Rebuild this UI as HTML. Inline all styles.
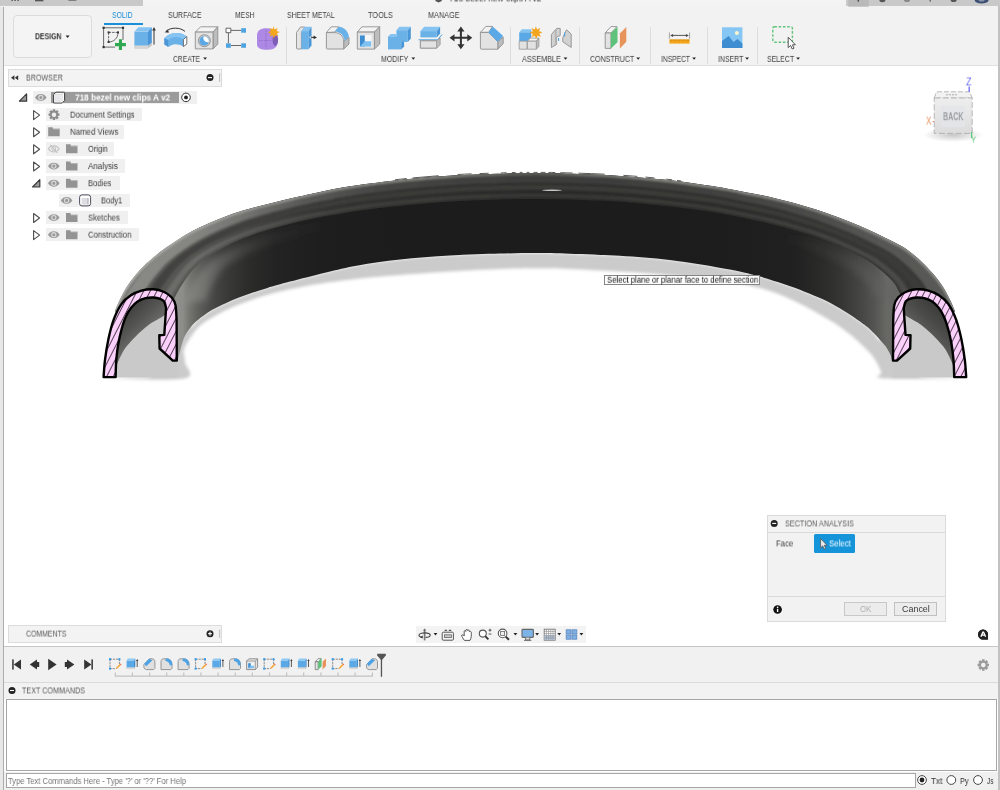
<!DOCTYPE html>
<html>
<head>
<meta charset="utf-8">
<style>
*{box-sizing:border-box;margin:0;padding:0}
html,body{width:1000px;height:790px;overflow:hidden;background:#fff}
body{font-family:"Liberation Sans",sans-serif;position:relative;color:#333}
.abs{position:absolute}
.t{position:absolute;white-space:pre;line-height:1;transform-origin:0 50%;will-change:transform}
#topL{left:0;top:0;width:142.6px;height:6.6px;background:#c9c9c9}
#topR{left:846px;top:0;width:154px;height:6.6px;background:#c9c9c9}
#topM{left:143px;top:0;width:703px;height:7px;background:#f3f3f3}
#toolbar{left:0;top:6px;width:1000px;height:59.6px;background:#f2f2f2;border-bottom:1px solid #e0e0e0}
#edgeL{left:0;top:6.6px;width:4.4px;height:784px;background:#e8e8e8;border-right:1.2px solid #adadad}
#edgeR{left:998px;top:6px;width:2px;height:784px;background:#c2c2c2}
.sep{position:absolute;top:27px;width:1px;height:37px;background:#dedede}
#design{left:12.8px;top:14.6px;width:79px;height:43.6px;border:1px solid #dcdcdc;border-radius:4px;background:#f4f4f4}
.hdr{position:absolute;background:#f3f3f3;border:1px solid #dcdcdc}
.row{position:absolute;background:#f0f0f0}
#timeline{left:4px;top:646px;width:994px;height:37px;background:#f1f1f1;border-top:1px solid #c6c6c6}
#tcHdr{left:4px;top:682px;width:994px;height:17px;background:#f2f2f2;border-top:1px solid #dadada}
#tcArea{left:6px;top:698.8px;width:991px;height:72.6px;background:#fff;border:1px solid #a6a6a6}
#tcBar{left:4px;top:772px;width:994px;height:18px;background:#f0f0f0}
#tcInput{left:6px;top:773px;width:909.6px;height:14.6px;background:#fff;border:1px solid #a6a6a6}
#navbar{left:416px;top:626px;width:170px;height:17px;background:#f3f3f3}
#dlg{left:767px;top:515px;width:179px;height:107px;background:#f2f2f2;border:1px solid #dadada}
#tip{left:604px;top:274.7px;width:156px;height:10px;background:#fdfdfd;border:1px solid #858585}

</style>
</head>
<body>
<div class="abs" id="topM"></div>
<div class="abs" id="topL"></div>
<div class="abs" id="topR"></div>
<div class="abs" id="toolbar"></div>
<svg class="abs" id="canvas" style="left:0;top:65px" width="1000" height="582" viewBox="0 65 1000 582">
<!--RING-->
<defs>
<linearGradient id="gWall" gradientUnits="userSpaceOnUse" x1="103" y1="0" x2="967" y2="0"><stop offset="0.0856" stop-color="#90908c"/><stop offset="0.0926" stop-color="#8c8c88"/><stop offset="0.1007" stop-color="#74746f"/><stop offset="0.1088" stop-color="#62625f"/><stop offset="0.1204" stop-color="#50504e"/><stop offset="0.1331" stop-color="#424240"/><stop offset="0.1493" stop-color="#363635"/><stop offset="0.1701" stop-color="#2b2b2a"/><stop offset="0.1991" stop-color="#232323"/><stop offset="0.2512" stop-color="#1e1e1e"/><stop offset="0.3438" stop-color="#1c1c1c"/><stop offset="0.4988" stop-color="#1c1c1c"/><stop offset="0.5009" stop-color="#1c1c1c"/><stop offset="0.6560" stop-color="#1c1c1c"/><stop offset="0.7486" stop-color="#1e1e1e"/><stop offset="0.8007" stop-color="#212121"/><stop offset="0.8296" stop-color="#2a2a29"/><stop offset="0.8505" stop-color="#333332"/><stop offset="0.8667" stop-color="#3e3e3c"/><stop offset="0.8794" stop-color="#484846"/><stop offset="0.8910" stop-color="#525250"/><stop offset="0.8991" stop-color="#5c5c59"/><stop offset="0.9072" stop-color="#686865"/><stop offset="0.9141" stop-color="#666663"/></linearGradient>
<linearGradient id="gTop" gradientUnits="userSpaceOnUse" x1="103" y1="0" x2="967" y2="0"><stop offset="0.0185" stop-color="#5a5a57"/><stop offset="0.1123" stop-color="#545451"/><stop offset="0.1817" stop-color="#424240"/><stop offset="0.2627" stop-color="#313130"/><stop offset="0.4988" stop-color="#282827"/><stop offset="0.5009" stop-color="#282827"/><stop offset="0.7370" stop-color="#2a2a29"/><stop offset="0.8181" stop-color="#2f2f2e"/><stop offset="0.8875" stop-color="#363634"/><stop offset="0.9812" stop-color="#3a3a38"/></linearGradient>
<linearGradient id="gRim" gradientUnits="userSpaceOnUse" x1="103" y1="0" x2="967" y2="0"><stop offset="0.0185" stop-color="#b2b2ae"/><stop offset="0.1123" stop-color="#a6a6a2"/><stop offset="0.1817" stop-color="#92928f"/><stop offset="0.2627" stop-color="#8a8a87"/><stop offset="0.3669" stop-color="#84847f"/><stop offset="0.4363" stop-color="#6e6e6b"/><stop offset="0.4988" stop-color="#585856"/><stop offset="0.5009" stop-color="#585856"/><stop offset="0.5634" stop-color="#6e6e6b"/><stop offset="0.6329" stop-color="#84847f"/><stop offset="0.7370" stop-color="#868683"/><stop offset="0.8181" stop-color="#868683"/><stop offset="0.8875" stop-color="#8a8a86"/><stop offset="0.9812" stop-color="#8e8e8a"/></linearGradient>
<linearGradient id="gA" gradientUnits="userSpaceOnUse" x1="103" y1="0" x2="967" y2="0"><stop offset="0.0185" stop-color="#8a8a86"/><stop offset="0.1007" stop-color="#868682"/><stop offset="0.1586" stop-color="#747471"/><stop offset="0.2280" stop-color="#5a5a58"/><stop offset="0.3206" stop-color="#464644"/><stop offset="0.4988" stop-color="#3d3d3b"/><stop offset="0.5009" stop-color="#3d3d3b"/><stop offset="0.6792" stop-color="#40403e"/><stop offset="0.7718" stop-color="#464644"/><stop offset="0.8412" stop-color="#4e4e4c"/><stop offset="0.8991" stop-color="#565654"/><stop offset="0.9812" stop-color="#5a5a57"/></linearGradient>
<linearGradient id="gB" gradientUnits="userSpaceOnUse" x1="103" y1="0" x2="967" y2="0"><stop offset="0.0185" stop-color="#454543"/><stop offset="0.1586" stop-color="#403f3d"/><stop offset="0.2512" stop-color="#3c3c3a"/><stop offset="0.4988" stop-color="#3a3a38"/><stop offset="0.5009" stop-color="#3a3a38"/><stop offset="0.7486" stop-color="#3a3a38"/><stop offset="0.8412" stop-color="#3a3a38"/><stop offset="0.9812" stop-color="#3a3a38"/></linearGradient>
<linearGradient id="gC" gradientUnits="userSpaceOnUse" x1="103" y1="0" x2="967" y2="0"><stop offset="0.0185" stop-color="#70706c"/><stop offset="0.1123" stop-color="#6a6a67"/><stop offset="0.1817" stop-color="#545452"/><stop offset="0.2743" stop-color="#40403e"/><stop offset="0.4988" stop-color="#383836"/><stop offset="0.5009" stop-color="#383836"/><stop offset="0.7255" stop-color="#3c3c3a"/><stop offset="0.8181" stop-color="#424240"/><stop offset="0.8875" stop-color="#4a4a48"/><stop offset="0.9812" stop-color="#4e4e4c"/></linearGradient>
<linearGradient id="gD" gradientUnits="userSpaceOnUse" x1="103" y1="0" x2="967" y2="0"><stop offset="0.0856" stop-color="#8e8e8a" stop-opacity="0.75"/><stop offset="0.1181" stop-color="#868682" stop-opacity="0.60"/><stop offset="0.1586" stop-color="#70706d" stop-opacity="0.30"/><stop offset="0.2049" stop-color="#5a5a58" stop-opacity="0.10"/><stop offset="0.2627" stop-color="#555" stop-opacity="0.00"/><stop offset="0.4988" stop-color="#555" stop-opacity="0.00"/><stop offset="0.5009" stop-color="#444" stop-opacity="0.00"/><stop offset="0.7833" stop-color="#444" stop-opacity="0.00"/><stop offset="0.8412" stop-color="#4e4e4c" stop-opacity="0.20"/><stop offset="0.8817" stop-color="#5e5e5b" stop-opacity="0.45"/><stop offset="0.9141" stop-color="#666663" stop-opacity="0.60"/></linearGradient>
<linearGradient id="gU" gradientUnits="userSpaceOnUse" x1="118" y1="300" x2="160" y2="345"><stop offset="0" stop-color="#2e2e2d"/><stop offset="0.5" stop-color="#565654"/><stop offset="1" stop-color="#8a8a87"/></linearGradient>
<linearGradient id="gUr" gradientUnits="userSpaceOnUse" x1="951.8" y1="300" x2="909.8" y2="345"><stop offset="0" stop-color="#2e2e2d"/><stop offset="0.5" stop-color="#4c4c4a"/><stop offset="1" stop-color="#767673"/></linearGradient>
<pattern id="hatch" patternUnits="userSpaceOnUse" width="5.9" height="5.9" patternTransform="rotate(27)"><rect width="5.9" height="5.9" fill="#fbd0fb"/><rect x="0" y="0" width="0.8" height="5.9" fill="#2c1c2c"/></pattern>
<filter id="blS" x="-5%" y="-20%" width="110%" height="140%"><feGaussianBlur stdDeviation="1.5"/></filter>
<filter id="bl1" x="-5%" y="-20%" width="110%" height="140%"><feGaussianBlur stdDeviation="0.9"/></filter>
<filter id="blD" x="-5%" y="-30%" width="110%" height="160%"><feGaussianBlur stdDeviation="3.2"/></filter>
<filter id="bl05"><feGaussianBlur stdDeviation="0.5"/></filter>
<clipPath id="clipRing"><path d="M114.8,311.5 C115.4,310.1 116.5,306.8 118.3,303.0 C120.1,299.2 122.8,293.4 125.5,289.0 C128.2,284.6 130.8,280.8 134.2,276.7 C137.5,272.6 141.8,267.9 145.6,264.2 C149.4,260.5 153.2,257.4 157.0,254.4 C160.8,251.4 163.2,249.5 168.4,246.0 C173.6,242.5 181.1,237.3 188.0,233.4 C194.9,229.5 202.7,226.0 210.0,222.8 C217.3,219.6 224.7,216.6 232.0,214.0 C239.3,211.4 246.7,209.4 254.0,207.4 C261.3,205.4 268.7,203.7 276.0,201.9 C283.3,200.1 290.7,198.5 298.0,196.8 C305.3,195.2 311.0,193.8 320.0,192.0 C329.0,190.2 338.0,188.1 352.0,186.0 C366.0,183.9 386.7,181.3 404.0,179.5 C421.3,177.7 438.7,176.3 456.0,175.3 C473.3,174.3 494.9,173.8 508.0,173.4 C521.1,173.0 525.9,173.1 534.9,173.1 C543.9,173.1 548.6,173.0 561.8,173.4 C574.9,173.8 596.5,174.3 613.8,175.4 C631.1,176.5 648.5,177.9 665.8,179.8 C683.1,181.7 703.8,184.8 717.8,187.0 C731.8,189.2 741.0,191.3 750.0,193.1 C759.0,194.8 764.7,195.8 772.0,197.5 C779.3,199.2 786.7,201.0 794.0,203.0 C801.3,205.0 808.7,207.2 816.0,209.6 C823.3,212.0 830.7,214.6 838.0,217.3 C845.3,220.1 852.7,222.9 860.0,226.1 C867.3,229.2 875.1,232.9 882.0,236.2 C888.9,239.5 896.3,243.0 901.4,246.0 C906.5,249.0 909.0,251.0 912.8,254.0 C916.6,257.0 920.4,260.4 924.2,264.2 C928.0,268.0 932.2,272.6 935.6,276.7 C938.9,280.8 941.6,284.6 944.3,289.0 C946.9,293.4 949.7,299.2 951.5,303.0 C953.3,306.8 954.4,310.1 955.0,311.5 L892.2,362.0 C891.9,360.8 891.4,357.2 890.3,354.6 C889.2,352.0 887.4,348.9 885.8,346.5 C884.2,344.1 882.5,342.6 880.5,340.4 C878.5,338.1 876.2,335.4 873.8,333.0 C871.4,330.6 870.5,329.4 866.3,326.2 C862.1,323.0 854.5,317.6 848.6,313.8 C842.7,310.0 836.7,306.2 830.9,303.2 C825.1,300.1 819.7,298.0 813.8,295.5 C807.9,293.0 801.4,290.4 795.4,288.1 C789.4,285.9 783.7,283.9 777.8,282.0 C771.9,280.1 768.0,278.7 760.0,276.6 C752.0,274.5 744.8,272.3 729.8,269.5 C714.8,266.7 688.1,262.3 669.8,260.0 C651.5,257.7 636.5,256.9 619.8,255.8 C603.1,254.8 583.9,254.2 569.8,253.7 C555.6,253.2 546.5,253.0 534.9,253.0 C523.3,253.0 514.1,253.2 500.0,253.6 C485.9,254.0 466.7,254.6 450.0,255.6 C433.3,256.6 415.3,258.0 400.0,259.6 C384.7,261.2 370.3,263.3 358.0,265.4 C345.7,267.5 337.3,269.7 326.0,272.4 C314.7,275.1 299.8,279.0 290.0,281.6 C280.2,284.2 273.6,286.1 267.5,287.9 C261.4,289.7 258.2,290.7 253.6,292.3 C248.9,293.9 244.2,295.5 239.6,297.3 C234.9,299.1 230.3,301.1 225.7,303.2 C221.1,305.3 216.4,307.3 211.8,310.1 C207.2,312.9 201.4,317.1 197.9,319.9 C194.4,322.7 193.2,323.9 190.9,326.9 C188.6,329.9 186.0,332.9 183.9,338.0 C181.8,343.1 179.6,353.5 178.4,357.5 C177.2,361.5 177.2,361.2 177.0,362.0 Z"/></clipPath>
</defs>
<path d="M150.0,377.0 L178.0,330.0 C180.2,329.5 187.6,328.6 190.9,326.9 C194.2,325.2 194.4,322.7 197.9,319.9 C201.4,317.1 207.2,312.9 211.8,310.1 C216.4,307.3 221.1,305.3 225.7,303.2 C230.3,301.1 234.9,299.1 239.6,297.3 C244.2,295.5 248.9,293.9 253.6,292.3 C258.2,290.7 261.4,289.7 267.5,287.9 C273.6,286.1 280.2,284.2 290.0,281.6 C299.8,279.0 314.7,275.1 326.0,272.4 C337.3,269.7 345.7,267.5 358.0,265.4 C370.3,263.3 384.7,261.2 400.0,259.6 C415.3,258.0 433.3,256.6 450.0,255.6 C466.7,254.6 485.9,254.0 500.0,253.6 C514.1,253.2 523.3,253.0 534.9,253.0 C546.5,253.0 555.6,253.2 569.8,253.7 C583.9,254.2 603.1,254.8 619.8,255.8 C636.5,256.9 651.5,257.7 669.8,260.0 C688.1,262.3 714.8,266.7 729.8,269.5 C744.8,272.3 752.0,274.5 760.0,276.6 C768.0,278.7 771.9,280.1 777.8,282.0 C783.7,283.9 789.4,285.9 795.4,288.1 C801.4,290.4 807.9,293.0 813.8,295.5 C819.7,298.0 825.1,300.1 830.9,303.2 C836.7,306.2 842.7,310.0 848.6,313.8 C854.5,317.6 862.1,323.0 866.3,326.2 C870.5,329.4 871.4,330.6 873.8,333.0 C876.2,335.4 877.5,340.9 880.5,340.4 C883.5,339.9 889.9,331.7 891.8,330.0 L919.8,377.0 L965.8,378.5 C952.1,378.5 897.9,379.6 883.8,378.5 C869.7,377.4 882.7,375.1 881.3,372.0 C879.9,368.9 877.7,363.7 875.2,359.9 C872.7,356.1 870.7,353.6 866.3,349.2 C861.9,344.8 854.5,338.0 848.6,333.3 C842.7,328.6 839.8,326.2 830.9,320.9 C822.0,315.6 807.2,306.9 795.4,301.4 C783.6,295.9 774.3,291.7 760.0,288.0 C745.7,284.3 724.8,281.1 709.8,279.0 C694.8,276.9 684.8,276.4 669.8,275.2 C654.8,274.0 636.5,272.6 619.8,271.6 C603.1,270.6 583.9,269.6 569.8,269.0 C555.6,268.4 546.5,268.3 534.9,268.3 C523.3,268.3 514.1,268.5 500.0,269.0 C485.9,269.5 466.7,270.5 450.0,271.5 C433.3,272.5 415.0,273.8 400.0,275.0 C385.0,276.2 373.3,277.1 360.0,278.5 C346.7,279.9 331.7,281.9 320.0,283.7 C308.3,285.5 298.8,287.4 290.0,289.2 C281.2,291.0 273.6,293.0 267.5,294.7 C261.4,296.4 258.2,297.6 253.6,299.2 C248.9,300.8 244.2,302.4 239.6,304.2 C234.9,306.0 230.3,307.9 225.7,310.2 C221.1,312.4 216.4,314.8 211.8,317.7 C207.2,320.6 202.5,322.6 197.9,327.7 C193.3,332.8 186.7,342.3 184.5,348.0 C182.3,353.7 185.1,356.9 185.0,362.0 C184.9,367.1 197.5,375.8 184.0,378.5 C170.5,381.2 117.3,378.5 104.0,378.5 Z" fill="#cbcbcb" filter="url(#blS)"/>
<path d="M114.8,311.5 C115.4,310.1 116.5,306.8 118.3,303.0 C120.1,299.2 122.8,293.4 125.5,289.0 C128.2,284.6 130.8,280.8 134.2,276.7 C137.5,272.6 141.8,267.9 145.6,264.2 C149.4,260.5 153.2,257.4 157.0,254.4 C160.8,251.4 163.2,249.5 168.4,246.0 C173.6,242.5 181.1,237.3 188.0,233.4 C194.9,229.5 202.7,226.0 210.0,222.8 C217.3,219.6 224.7,216.6 232.0,214.0 C239.3,211.4 246.7,209.4 254.0,207.4 C261.3,205.4 268.7,203.7 276.0,201.9 C283.3,200.1 290.7,198.5 298.0,196.8 C305.3,195.2 311.0,193.8 320.0,192.0 C329.0,190.2 338.0,188.1 352.0,186.0 C366.0,183.9 386.7,181.3 404.0,179.5 C421.3,177.7 438.7,176.3 456.0,175.3 C473.3,174.3 494.9,173.8 508.0,173.4 C521.1,173.0 525.9,173.1 534.9,173.1 C543.9,173.1 548.6,173.0 561.8,173.4 C574.9,173.8 596.5,174.3 613.8,175.4 C631.1,176.5 648.5,177.9 665.8,179.8 C683.1,181.7 703.8,184.8 717.8,187.0 C731.8,189.2 741.0,191.3 750.0,193.1 C759.0,194.8 764.7,195.8 772.0,197.5 C779.3,199.2 786.7,201.0 794.0,203.0 C801.3,205.0 808.7,207.2 816.0,209.6 C823.3,212.0 830.7,214.6 838.0,217.3 C845.3,220.1 852.7,222.9 860.0,226.1 C867.3,229.2 875.1,232.9 882.0,236.2 C888.9,239.5 896.3,243.0 901.4,246.0 C906.5,249.0 909.0,251.0 912.8,254.0 C916.6,257.0 920.4,260.4 924.2,264.2 C928.0,268.0 932.2,272.6 935.6,276.7 C938.9,280.8 941.6,284.6 944.3,289.0 C946.9,293.4 949.7,299.2 951.5,303.0 C953.3,306.8 954.4,310.1 955.0,311.5 L892.2,362.0 C891.9,360.8 891.4,357.2 890.3,354.6 C889.2,352.0 887.4,348.9 885.8,346.5 C884.2,344.1 882.5,342.6 880.5,340.4 C878.5,338.1 876.2,335.4 873.8,333.0 C871.4,330.6 870.5,329.4 866.3,326.2 C862.1,323.0 854.5,317.6 848.6,313.8 C842.7,310.0 836.7,306.2 830.9,303.2 C825.1,300.1 819.7,298.0 813.8,295.5 C807.9,293.0 801.4,290.4 795.4,288.1 C789.4,285.9 783.7,283.9 777.8,282.0 C771.9,280.1 768.0,278.7 760.0,276.6 C752.0,274.5 744.8,272.3 729.8,269.5 C714.8,266.7 688.1,262.3 669.8,260.0 C651.5,257.7 636.5,256.9 619.8,255.8 C603.1,254.8 583.9,254.2 569.8,253.7 C555.6,253.2 546.5,253.0 534.9,253.0 C523.3,253.0 514.1,253.2 500.0,253.6 C485.9,254.0 466.7,254.6 450.0,255.6 C433.3,256.6 415.3,258.0 400.0,259.6 C384.7,261.2 370.3,263.3 358.0,265.4 C345.7,267.5 337.3,269.7 326.0,272.4 C314.7,275.1 299.8,279.0 290.0,281.6 C280.2,284.2 273.6,286.1 267.5,287.9 C261.4,289.7 258.2,290.7 253.6,292.3 C248.9,293.9 244.2,295.5 239.6,297.3 C234.9,299.1 230.3,301.1 225.7,303.2 C221.1,305.3 216.4,307.3 211.8,310.1 C207.2,312.9 201.4,317.1 197.9,319.9 C194.4,322.7 193.2,323.9 190.9,326.9 C188.6,329.9 186.0,332.9 183.9,338.0 C181.8,343.1 179.6,353.5 178.4,357.5 C177.2,361.5 177.2,361.2 177.0,362.0 Z" fill="url(#gWall)"/>
<g clip-path="url(#clipRing)">
<path d="M114.8,311.5 C115.4,310.1 116.5,306.8 118.3,303.0 C120.1,299.2 122.8,293.4 125.5,289.0 C128.2,284.6 130.8,280.8 134.2,276.7 C137.5,272.6 141.8,267.9 145.6,264.2 C149.4,260.5 153.2,257.4 157.0,254.4 C160.8,251.4 163.2,249.5 168.4,246.0 C173.6,242.5 181.1,237.3 188.0,233.4 C194.9,229.5 202.7,226.0 210.0,222.8 C217.3,219.6 224.7,216.6 232.0,214.0 C239.3,211.4 246.7,209.4 254.0,207.4 C261.3,205.4 268.7,203.7 276.0,201.9 C283.3,200.1 290.7,198.5 298.0,196.8 C305.3,195.2 311.0,193.8 320.0,192.0 C329.0,190.2 338.0,188.1 352.0,186.0 C366.0,183.9 386.7,181.3 404.0,179.5 C421.3,177.7 438.7,176.3 456.0,175.3 C473.3,174.3 494.9,173.8 508.0,173.4 C521.1,173.0 525.9,173.1 534.9,173.1 C543.9,173.1 548.6,173.0 561.8,173.4 C574.9,173.8 596.5,174.3 613.8,175.4 C631.1,176.5 648.5,177.9 665.8,179.8 C683.1,181.7 703.8,184.8 717.8,187.0 C731.8,189.2 741.0,191.3 750.0,193.1 C759.0,194.8 764.7,195.8 772.0,197.5 C779.3,199.2 786.7,201.0 794.0,203.0 C801.3,205.0 808.7,207.2 816.0,209.6 C823.3,212.0 830.7,214.6 838.0,217.3 C845.3,220.1 852.7,222.9 860.0,226.1 C867.3,229.2 875.1,232.9 882.0,236.2 C888.9,239.5 896.3,243.0 901.4,246.0 C906.5,249.0 909.0,251.0 912.8,254.0 C916.6,257.0 920.4,260.4 924.2,264.2 C928.0,268.0 932.2,272.6 935.6,276.7 C938.9,280.8 941.6,284.6 944.3,289.0 C946.9,293.4 949.7,299.2 951.5,303.0 C953.3,306.8 954.4,310.1 955.0,311.5 L901.6,300.6 C901.4,299.7 901.3,297.6 900.5,295.4 C899.7,293.2 898.0,289.9 896.8,287.6 C895.6,285.3 895.2,284.2 893.0,281.7 C890.9,279.3 887.1,275.7 884.1,272.9 C881.1,270.2 878.0,267.8 874.8,265.4 C871.6,263.0 869.4,261.4 864.7,258.8 C860.0,256.2 852.7,252.6 846.7,249.8 C840.6,246.9 834.7,244.2 828.5,241.7 C822.2,239.1 815.7,236.7 809.3,234.6 C802.9,232.5 796.5,230.8 790.2,229.0 C783.8,227.2 777.5,225.5 771.0,223.9 C764.5,222.3 757.5,220.8 751.1,219.4 C744.7,218.1 740.5,217.3 732.7,215.8 C724.9,214.4 716.9,212.5 704.5,210.8 C692.1,209.0 673.9,206.8 658.2,205.2 C642.4,203.6 626.2,202.1 610.0,201.1 C593.8,200.2 573.4,199.7 560.8,199.3 C548.3,199.0 543.5,199.0 534.9,198.9 C526.2,198.9 521.5,198.9 508.9,199.2 C496.4,199.6 476.0,200.0 459.8,201.0 C443.6,201.9 427.4,203.2 411.6,204.7 C395.9,206.1 377.7,208.1 365.3,209.8 C352.9,211.4 345.0,213.0 337.1,214.3 C329.2,215.6 324.3,216.2 317.9,217.4 C311.6,218.6 305.2,220.0 298.8,221.5 C292.4,223.0 286.0,224.7 279.6,226.5 C273.3,228.3 266.9,229.9 260.5,232.1 C254.1,234.2 247.6,236.5 241.3,239.1 C235.1,241.8 229.2,244.5 223.2,247.7 C217.1,250.9 209.4,255.4 205.1,258.4 C200.7,261.3 199.5,262.9 196.9,265.4 C194.3,267.9 192.2,270.2 189.7,273.5 C187.1,276.9 183.4,282.6 181.5,285.5 C179.6,288.4 179.4,288.8 178.2,290.9 C177.1,293.0 175.4,296.0 174.5,298.2 C173.7,300.5 173.2,303.4 172.9,304.4 Z" fill="url(#gTop)"/>
<g filter="url(#bl1)">
<path d="M119.1,311.0 C119.6,309.6 120.7,306.3 122.4,302.6 C124.2,299.0 126.8,293.4 129.4,289.1 C131.9,284.9 134.4,281.4 137.7,277.4 C140.9,273.3 145.1,268.6 148.8,264.9 C152.6,261.2 156.2,258.2 159.9,255.2 C163.6,252.2 166.0,250.4 171.1,246.9 C176.2,243.5 183.7,238.3 190.6,234.5 C197.5,230.6 205.1,227.2 212.3,224.0 C219.6,220.8 226.8,217.9 234.1,215.3 C241.4,212.8 248.6,210.8 255.9,208.8 C263.2,206.8 270.4,205.1 277.7,203.3 C284.9,201.6 292.2,199.9 299.5,198.3 C306.7,196.7 312.3,195.4 321.3,193.6 C330.2,191.9 339.1,189.8 353.0,187.8 C366.9,185.7 387.3,183.1 404.6,181.4 C421.8,179.6 439.0,178.2 456.3,177.2 C473.5,176.2 495.0,175.7 508.1,175.3 C521.2,174.9 526.0,175.0 534.9,175.0 C543.8,175.0 548.6,174.9 561.7,175.3 C574.8,175.7 596.3,176.2 613.5,177.3 C630.8,178.4 648.0,179.8 665.2,181.7 C682.5,183.6 702.9,186.6 716.8,188.8 C730.7,190.9 739.8,193.0 748.7,194.8 C757.7,196.5 763.2,197.5 770.5,199.1 C777.7,200.7 785.0,202.6 792.3,204.5 C799.6,206.5 806.8,208.7 814.1,211.0 C821.4,213.4 828.6,215.9 835.9,218.6 C843.1,221.3 850.4,224.1 857.7,227.2 C864.9,230.4 872.6,233.9 879.4,237.2 C886.2,240.5 893.6,244.0 898.7,246.9 C903.8,249.9 906.2,251.9 910.0,254.8 C913.8,257.8 917.5,261.1 921.2,264.8 C925.0,268.5 929.2,273.1 932.5,277.1 C935.7,281.1 938.3,284.7 940.8,288.9 C943.3,293.1 946.0,298.8 947.7,302.4 C949.5,306.1 950.5,309.3 951.1,310.7 L934.8,307.4 C934.3,306.2 933.6,303.3 932.2,300.1 C930.8,297.0 928.4,292.0 926.3,288.5 C924.2,284.9 922.4,282.1 919.5,278.6 C916.6,275.1 912.5,270.9 909.0,267.5 C905.5,264.1 902.0,261.1 898.4,258.3 C894.8,255.5 892.5,253.7 887.5,250.9 C882.5,248.0 875.2,244.5 868.6,241.3 C862.0,238.2 855.0,234.9 848.0,232.0 C841.1,229.1 834.1,226.4 827.1,223.9 C820.2,221.3 813.2,219.1 806.2,216.9 C799.2,214.8 792.3,212.8 785.3,210.9 C778.3,209.1 771.1,207.4 764.1,205.8 C757.1,204.3 752.0,203.3 743.4,201.7 C734.9,200.1 726.2,198.0 712.8,196.0 C699.3,194.0 679.7,191.2 662.9,189.4 C646.2,187.6 629.3,186.2 612.4,185.2 C595.4,184.1 574.3,183.6 561.4,183.2 C548.5,182.9 543.7,182.9 534.9,182.9 C526.1,182.9 521.3,182.8 508.4,183.2 C495.5,183.5 474.4,184.0 457.4,185.0 C440.5,186.0 423.6,187.4 406.9,189.0 C390.1,190.7 370.4,193.1 357.0,195.0 C343.6,196.9 335.1,198.9 326.5,200.5 C317.9,202.1 312.5,203.1 305.6,204.6 C298.6,206.1 291.6,207.6 284.6,209.3 C277.7,211.0 270.7,212.7 263.7,214.6 C256.7,216.6 249.8,218.4 242.8,220.8 C235.8,223.2 228.8,226.0 221.9,229.0 C215.0,232.0 207.9,235.2 201.3,238.8 C194.7,242.5 187.2,247.4 182.3,250.7 C177.4,254.0 175.5,255.7 172.1,258.6 C168.8,261.4 165.6,264.1 162.3,267.7 C159.0,271.3 154.9,276.4 152.1,280.0 C149.3,283.7 147.6,286.2 145.5,289.7 C143.4,293.2 141.1,298.0 139.6,301.2 C138.2,304.4 137.3,307.5 136.8,308.8 Z" fill="url(#gA)"/>
<path d="M141.1,308.3 C141.6,307.0 142.4,303.9 143.8,300.9 C145.1,297.8 147.4,293.2 149.4,289.9 C151.3,286.5 152.9,284.3 155.6,280.7 C158.3,277.1 162.3,272.0 165.6,268.4 C168.8,264.9 171.8,262.2 175.1,259.4 C178.3,256.6 180.2,254.8 185.0,251.6 C189.8,248.3 197.4,243.5 203.9,239.9 C210.4,236.3 217.4,233.1 224.2,230.2 C231.0,227.2 238.0,224.5 244.9,222.2 C251.8,219.8 258.7,217.9 265.6,216.0 C272.5,214.1 279.4,212.4 286.3,210.8 C293.2,209.1 300.1,207.6 307.0,206.1 C313.9,204.7 319.2,203.7 327.7,202.1 C336.2,200.5 344.7,198.6 358.0,196.8 C371.3,194.9 390.8,192.5 407.4,190.9 C424.1,189.3 440.9,187.9 457.7,186.9 C474.6,185.9 495.6,185.4 508.4,185.1 C521.3,184.7 526.1,184.8 534.9,184.8 C543.7,184.8 548.5,184.8 561.4,185.1 C574.2,185.5 595.2,186.0 612.1,187.1 C628.9,188.1 645.7,189.5 662.4,191.3 C679.0,193.1 698.5,195.7 711.8,197.8 C725.1,199.8 733.7,201.8 742.2,203.4 C750.6,205.0 755.6,205.9 762.5,207.4 C769.4,208.9 776.6,210.6 783.6,212.5 C790.6,214.3 797.4,216.3 804.3,218.4 C811.2,220.5 818.1,222.7 825.0,225.1 C831.9,227.6 838.9,230.3 845.7,233.2 C852.6,236.0 859.5,239.2 866.0,242.3 C872.5,245.5 879.9,249.0 884.8,251.8 C889.7,254.6 892.1,256.4 895.6,259.2 C899.1,261.9 902.6,264.9 906.1,268.2 C909.5,271.5 913.5,275.6 916.3,279.0 C919.1,282.3 920.8,284.9 922.8,288.4 C924.8,291.8 927.1,296.5 928.4,299.6 C929.7,302.6 930.4,305.4 930.8,306.6 L920.2,304.4 C919.8,303.3 919.3,300.8 918.2,298.0 C917.1,295.3 915.0,291.1 913.3,288.1 C911.6,285.1 910.4,283.0 907.8,280.0 C905.3,277.0 901.3,273.0 898.0,269.9 C894.7,266.8 891.4,264.0 888.0,261.4 C884.6,258.9 882.3,257.1 877.5,254.4 C872.6,251.6 865.3,248.1 858.9,245.1 C852.6,242.0 846.0,239.0 839.4,236.3 C832.8,233.5 826.0,230.9 819.3,228.6 C812.6,226.2 805.8,224.2 799.1,222.2 C792.4,220.3 785.8,218.4 779.0,216.6 C772.2,214.9 765.1,213.3 758.4,211.8 C751.6,210.4 746.9,209.5 738.7,207.9 C730.5,206.4 722.1,204.4 709.1,202.5 C696.1,200.6 677.1,198.1 660.8,196.4 C644.5,194.6 627.9,193.2 611.3,192.2 C594.7,191.2 573.9,190.7 561.2,190.3 C548.4,190.0 543.7,190.0 534.9,190.0 C526.1,190.0 521.4,189.9 508.6,190.3 C495.9,190.6 475.1,191.1 458.5,192.0 C441.9,193.0 425.3,194.4 409.0,195.9 C392.7,197.5 373.6,199.7 360.7,201.5 C347.7,203.3 339.4,205.1 331.2,206.6 C322.9,208.0 317.7,208.9 311.0,210.3 C304.3,211.6 297.6,213.1 290.9,214.7 C284.2,216.3 277.5,218.0 270.7,219.9 C264.0,221.7 257.3,223.5 250.6,225.8 C243.9,228.0 237.1,230.6 230.5,233.5 C223.9,236.3 217.3,239.3 210.9,242.8 C204.6,246.2 197.0,250.9 192.3,254.1 C187.7,257.2 186.0,258.9 183.0,261.6 C180.0,264.3 177.4,266.8 174.4,270.3 C171.4,273.8 167.5,279.1 165.1,282.5 C162.7,285.8 161.6,287.3 159.9,290.2 C158.2,293.1 156.2,297.1 155.0,299.9 C153.8,302.7 153.1,305.7 152.7,306.9 Z" fill="url(#gB)"/>
<path d="M160.7,305.9 C161.0,304.8 161.6,301.8 162.7,299.2 C163.8,296.7 165.7,293.1 167.1,290.5 C168.6,287.9 169.3,286.8 171.6,283.7 C173.8,280.5 177.6,275.0 180.4,271.6 C183.2,268.1 185.7,265.7 188.5,263.1 C191.3,260.5 192.8,258.8 197.3,255.8 C201.9,252.7 209.5,248.1 215.8,244.7 C222.0,241.4 228.3,238.4 234.8,235.7 C241.2,233.0 247.9,230.5 254.5,228.2 C261.1,226.0 267.7,224.3 274.2,222.5 C280.8,220.7 287.4,218.9 294.0,217.3 C300.6,215.8 307.2,214.4 313.8,213.1 C320.3,211.8 325.4,211.0 333.5,209.6 C341.6,208.2 349.8,206.5 362.5,204.8 C375.2,203.0 393.9,200.9 410.0,199.4 C426.1,197.8 442.5,196.5 459.0,195.6 C475.5,194.6 496.1,194.1 508.8,193.8 C521.4,193.5 526.2,193.5 534.9,193.5 C543.6,193.5 548.4,193.5 561.0,193.9 C573.7,194.2 594.3,194.7 610.8,195.7 C627.3,196.7 643.7,198.2 659.8,199.8 C675.9,201.5 694.5,203.9 707.3,205.8 C720.1,207.6 728.3,209.5 736.3,211.0 C744.4,212.5 748.9,213.4 755.5,214.8 C762.1,216.2 769.2,217.8 775.8,219.5 C782.5,221.2 789.0,223.0 795.6,224.9 C802.2,226.8 808.8,228.7 815.3,230.9 C821.9,233.2 828.6,235.7 835.1,238.4 C841.6,241.1 847.9,244.0 854.1,246.9 C860.3,249.9 867.7,253.4 872.4,256.1 C877.2,258.8 879.4,260.5 882.8,263.0 C886.1,265.5 889.3,268.2 892.5,271.1 C895.8,274.0 899.6,277.9 902.0,280.7 C904.4,283.5 905.3,285.2 906.8,287.9 C908.3,290.6 910.2,294.5 911.2,297.0 C912.2,299.5 912.6,301.9 912.8,302.9 L905.0,301.3 C904.8,300.4 904.6,298.1 903.7,295.9 C902.8,293.6 901.1,290.1 899.8,287.7 C898.5,285.3 897.9,284.0 895.7,281.4 C893.5,278.9 889.7,275.2 886.6,272.4 C883.6,269.6 880.5,267.1 877.2,264.7 C873.9,262.3 871.8,260.6 867.0,258.0 C862.3,255.4 855.0,251.8 848.9,248.9 C842.8,246.0 836.7,243.3 830.5,240.7 C824.2,238.1 817.6,235.7 811.1,233.5 C804.7,231.3 798.2,229.6 791.8,227.8 C785.3,225.9 779.0,224.2 772.5,222.6 C765.9,221.0 758.9,219.4 752.4,218.1 C746.0,216.7 741.6,215.8 733.8,214.4 C726.0,212.9 717.9,211.1 705.3,209.2 C692.8,207.4 674.5,205.2 658.7,203.6 C642.8,201.9 626.5,200.5 610.2,199.5 C593.9,198.5 573.5,198.1 560.9,197.7 C548.4,197.3 543.6,197.3 534.9,197.3 C526.2,197.3 521.4,197.3 508.9,197.6 C496.3,197.9 475.9,198.4 459.6,199.3 C443.3,200.2 427.0,201.6 411.1,203.1 C395.3,204.6 377.0,206.6 364.5,208.2 C351.9,209.9 344.0,211.6 336.0,212.9 C328.1,214.2 323.1,214.9 316.7,216.1 C310.2,217.3 303.8,218.7 297.4,220.2 C290.9,221.8 284.5,223.5 278.0,225.3 C271.6,227.1 265.1,228.8 258.7,230.9 C252.3,233.0 245.7,235.5 239.4,238.1 C233.1,240.8 227.0,243.6 220.9,246.8 C214.8,250.1 207.2,254.6 202.8,257.6 C198.3,260.6 197.0,262.2 194.4,264.7 C191.7,267.3 189.5,269.5 186.9,272.9 C184.3,276.3 180.5,282.0 178.5,285.0 C176.5,288.0 176.2,288.5 174.9,290.8 C173.6,293.0 171.9,296.2 171.0,298.6 C170.1,300.9 169.6,303.8 169.3,304.8 Z" fill="url(#gC)"/>
<path d="M114.8,311.5 C115.4,310.1 116.5,306.8 118.3,303.0 C120.1,299.2 122.8,293.4 125.5,289.0 C128.2,284.6 130.8,280.8 134.2,276.7 C137.5,272.6 141.8,267.9 145.6,264.2 C149.4,260.5 153.2,257.4 157.0,254.4 C160.8,251.4 163.2,249.5 168.4,246.0 C173.6,242.5 181.1,237.3 188.0,233.4 C194.9,229.5 202.7,226.0 210.0,222.8 C217.3,219.6 224.7,216.6 232.0,214.0 C239.3,211.4 246.7,209.4 254.0,207.4 C261.3,205.4 268.7,203.7 276.0,201.9 C283.3,200.1 290.7,198.5 298.0,196.8 C305.3,195.2 311.0,193.8 320.0,192.0 C329.0,190.2 338.0,188.1 352.0,186.0 C366.0,183.9 386.7,181.3 404.0,179.5 C421.3,177.7 438.7,176.3 456.0,175.3 C473.3,174.3 494.9,173.8 508.0,173.4 C521.1,173.0 525.9,173.1 534.9,173.1 C543.9,173.1 548.6,173.0 561.8,173.4 C574.9,173.8 596.5,174.3 613.8,175.4 C631.1,176.5 648.5,177.9 665.8,179.8 C683.1,181.7 703.8,184.8 717.8,187.0 C731.8,189.2 741.0,191.3 750.0,193.1 C759.0,194.8 764.7,195.8 772.0,197.5 C779.3,199.2 786.7,201.0 794.0,203.0 C801.3,205.0 808.7,207.2 816.0,209.6 C823.3,212.0 830.7,214.6 838.0,217.3 C845.3,220.1 852.7,222.9 860.0,226.1 C867.3,229.2 875.1,232.9 882.0,236.2 C888.9,239.5 896.3,243.0 901.4,246.0 C906.5,249.0 909.0,251.0 912.8,254.0 C916.6,257.0 920.4,260.4 924.2,264.2 C928.0,268.0 932.2,272.6 935.6,276.7 C938.9,280.8 941.6,284.6 944.3,289.0 C946.9,293.4 949.7,299.2 951.5,303.0 C953.3,306.8 954.4,310.1 955.0,311.5 " fill="none" stroke="url(#gRim)" stroke-width="4.2"/>
</g>
<path d="M183.3,303.1 C183.6,302.2 183.9,299.4 184.6,297.4 C185.3,295.4 186.8,293.0 187.7,291.2 C188.6,289.5 188.3,289.8 190.0,287.1 C191.6,284.4 195.2,278.5 197.6,275.2 C199.9,271.9 201.7,269.8 204.0,267.4 C206.4,265.0 207.4,263.4 211.6,260.6 C215.9,257.7 223.6,253.4 229.4,250.3 C235.3,247.2 240.9,244.6 247.0,242.1 C253.0,239.6 259.4,237.3 265.6,235.3 C271.8,233.3 278.0,231.6 284.2,229.9 C290.5,228.2 296.7,226.4 302.9,225.0 C309.1,223.5 315.3,222.2 321.5,221.1 C327.7,220.0 332.5,219.5 340.2,218.3 C347.9,217.1 355.5,215.5 367.7,214.0 C379.8,212.5 397.5,210.6 413.0,209.2 C428.4,207.8 444.5,206.4 460.5,205.5 C476.5,204.7 496.7,204.2 509.1,203.9 C521.5,203.5 526.3,203.5 534.9,203.6 C543.5,203.6 548.3,203.6 560.7,204.0 C573.1,204.3 593.3,204.8 609.3,205.8 C625.3,206.7 641.4,208.2 656.8,209.7 C672.3,211.2 690.0,213.3 702.1,215.0 C714.2,216.7 722.1,218.5 729.6,219.9 C737.2,221.3 741.1,222.1 747.4,223.4 C753.6,224.7 760.5,226.1 766.9,227.6 C773.3,229.2 779.3,230.8 785.5,232.4 C791.7,234.1 798.0,235.7 804.2,237.7 C810.4,239.7 816.8,242.0 822.8,244.5 C828.8,246.9 834.4,249.4 840.3,252.2 C846.2,255.0 853.6,258.6 858.2,261.1 C862.8,263.7 864.9,265.2 868.0,267.4 C871.1,269.7 874.0,272.0 876.9,274.5 C879.8,277.0 883.5,280.5 885.4,282.6 C887.3,284.8 887.3,285.4 888.3,287.3 C889.3,289.2 890.7,292.2 891.4,294.0 C892.0,295.9 891.9,297.9 892.1,298.6 L870.7,294.2 C870.7,293.7 871.2,292.2 870.9,291.0 C870.7,289.8 869.7,287.8 869.3,286.8 C868.9,285.7 869.8,286.1 868.4,284.6 C867.0,283.2 863.5,280.1 860.9,278.0 C858.3,275.9 855.7,274.0 852.8,272.0 C849.9,270.0 847.9,268.6 843.5,266.2 C839.1,263.9 831.8,260.2 826.2,257.6 C820.6,255.1 815.8,252.9 810.2,250.7 C804.6,248.5 798.5,246.3 792.7,244.6 C786.9,242.8 781.0,241.6 775.2,240.2 C769.4,238.8 763.7,237.3 757.7,236.0 C751.7,234.7 744.8,233.3 739.0,232.1 C733.2,231.0 729.7,230.2 722.7,228.9 C715.7,227.7 708.3,226.0 696.8,224.5 C685.3,223.0 668.6,221.3 653.8,219.8 C639.0,218.4 623.4,217.0 607.8,216.1 C592.2,215.1 572.4,214.7 560.3,214.3 C548.1,214.0 543.4,213.9 534.9,213.9 C526.4,213.9 521.6,213.9 509.5,214.2 C497.4,214.5 477.6,215.0 462.0,215.8 C446.4,216.6 430.8,218.0 416.0,219.2 C401.2,220.5 384.5,222.2 373.0,223.5 C361.5,224.8 354.2,226.3 347.0,227.2 C339.8,228.2 335.3,228.4 329.5,229.3 C323.7,230.3 317.8,231.4 312.0,232.8 C306.2,234.2 300.3,235.9 294.5,237.6 C288.7,239.2 282.8,240.7 277.0,242.5 C271.2,244.3 265.1,246.3 259.5,248.6 C253.9,250.9 249.0,253.2 243.5,256.1 C238.0,258.9 230.2,262.9 226.3,265.5 C222.4,268.1 221.8,269.6 220.0,271.8 C218.2,274.0 217.0,275.8 215.2,278.9 C213.3,282.0 210.0,288.5 208.9,290.6 C207.8,292.8 209.1,291.2 208.8,292.0 C208.4,292.8 207.5,294.1 207.1,295.5 C206.7,296.9 206.7,299.5 206.6,300.2 Z" fill="url(#gD)" filter="url(#blD)"/>
</g>
<clipPath id="topdash"><rect x="392" y="165" width="290" height="20"/></clipPath>
<path d="M114.8,311.5 C115.4,310.1 116.5,306.8 118.3,303.0 C120.1,299.2 122.8,293.4 125.5,289.0 C128.2,284.6 130.8,280.8 134.2,276.7 C137.5,272.6 141.8,267.9 145.6,264.2 C149.4,260.5 153.2,257.4 157.0,254.4 C160.8,251.4 163.2,249.5 168.4,246.0 C173.6,242.5 181.1,237.3 188.0,233.4 C194.9,229.5 202.7,226.0 210.0,222.8 C217.3,219.6 224.7,216.6 232.0,214.0 C239.3,211.4 246.7,209.4 254.0,207.4 C261.3,205.4 268.7,203.7 276.0,201.9 C283.3,200.1 290.7,198.5 298.0,196.8 C305.3,195.2 311.0,193.8 320.0,192.0 C329.0,190.2 338.0,188.1 352.0,186.0 C366.0,183.9 386.7,181.3 404.0,179.5 C421.3,177.7 438.7,176.3 456.0,175.3 C473.3,174.3 494.9,173.8 508.0,173.4 C521.1,173.0 525.9,173.1 534.9,173.1 C543.9,173.1 548.6,173.0 561.8,173.4 C574.9,173.8 596.5,174.3 613.8,175.4 C631.1,176.5 648.5,177.9 665.8,179.8 C683.1,181.7 703.8,184.8 717.8,187.0 C731.8,189.2 741.0,191.3 750.0,193.1 C759.0,194.8 764.7,195.8 772.0,197.5 C779.3,199.2 786.7,201.0 794.0,203.0 C801.3,205.0 808.7,207.2 816.0,209.6 C823.3,212.0 830.7,214.6 838.0,217.3 C845.3,220.1 852.7,222.9 860.0,226.1 C867.3,229.2 875.1,232.9 882.0,236.2 C888.9,239.5 896.3,243.0 901.4,246.0 C906.5,249.0 909.0,251.0 912.8,254.0 C916.6,257.0 920.4,260.4 924.2,264.2 C928.0,268.0 932.2,272.6 935.6,276.7 C938.9,280.8 941.6,284.6 944.3,289.0 C946.9,293.4 949.7,299.2 951.5,303.0 C953.3,306.8 954.4,310.1 955.0,311.5 " fill="none" stroke="#5c5c5a" stroke-width="1" stroke-dasharray="3 4 4 3 5 3 7 5 12 6 26 19 14 8 9 12 6 5 4 4 3 4" stroke-dashoffset="-290" clip-path="url(#topdash)" transform="translate(0,-0.7)"/>
<ellipse cx="552" cy="190.3" rx="10" ry="0.8" fill="#e0e0e0" opacity="0.85" filter="url(#bl05)"/>
<path d="M115.0,377.5 L115.0,350.0 L128.0,312.0 L150.0,300.0 L166.0,305.0 L166.0,335.0 L160.0,335.0 L160.0,348.0 L173.0,360.6 L177.5,360.6 L177.5,377.5 Z" fill="#c9c9c9"/>
<path d="M954.8,377.5 L954.8,350.0 L941.8,312.0 L919.8,300.0 L903.8,305.0 L903.8,335.0 L909.8,335.0 L909.8,348.0 L896.8,360.6 L892.3,360.6 L892.3,377.5 Z" fill="#c9c9c9"/>
<path d="M166.1,308.0 C165.8,306.9 165.1,303.0 164.1,301.5 C163.1,300.0 162.0,299.5 160.2,298.8 C158.4,298.1 155.9,297.6 153.5,297.5 C151.1,297.4 148.2,297.5 145.5,298.2 C142.8,298.9 140.0,299.9 137.6,301.5 C135.2,303.1 132.9,305.4 130.9,308.0 C128.9,310.6 127.1,313.7 125.6,317.2 C124.0,320.7 122.8,324.8 121.6,329.2 C120.4,333.6 119.2,338.7 118.3,343.8 C117.4,348.9 116.6,357.1 116.3,359.8 L116.3,366.0 C117.6,363.3 120.9,354.8 124.0,350.0 C127.1,345.2 130.9,341.3 134.9,337.2 C138.9,333.1 143.8,328.5 148.2,325.2 C152.6,321.9 158.5,319.0 161.5,317.2 C164.5,315.4 165.3,315.0 166.1,314.6 Z" fill="url(#gU)"/>
<path d="M903.7,308.0 C904.0,306.9 904.7,303.0 905.7,301.5 C906.7,300.0 907.8,299.5 909.6,298.8 C911.4,298.1 913.8,297.6 916.3,297.5 C918.8,297.4 921.6,297.5 924.3,298.2 C926.9,298.9 929.8,299.9 932.2,301.5 C934.6,303.1 936.9,305.4 938.9,308.0 C940.9,310.6 942.6,313.7 944.2,317.2 C945.7,320.7 947.0,324.8 948.2,329.2 C949.4,333.6 950.6,338.7 951.5,343.8 C952.4,348.9 953.2,357.1 953.5,359.8 L953.5,366.0 C952.2,363.3 948.9,354.8 945.8,350.0 C942.7,345.2 938.9,341.3 934.9,337.2 C930.9,333.1 926.0,328.5 921.6,325.2 C917.2,321.9 911.3,319.0 908.3,317.2 C905.3,315.4 904.5,315.0 903.7,314.6 Z" fill="url(#gUr)"/>
<path d="M103.6,377.1 C103.8,374.2 104.2,366.0 105.0,359.8 C105.8,353.6 106.9,346.5 108.3,339.8 C109.7,333.1 111.4,325.9 113.6,319.9 C115.8,313.9 118.7,308.0 121.6,303.9 C124.5,299.8 127.6,297.5 130.9,295.3 C134.2,293.1 137.7,291.6 141.5,290.6 C145.3,289.6 149.7,289.1 153.5,289.3 C157.3,289.5 161.1,290.7 164.1,292.0 C167.1,293.3 169.6,295.1 171.5,297.3 C173.4,299.5 174.7,301.5 175.5,305.3 C176.3,309.1 176.4,317.5 176.6,319.9 L176.8,360.6 L172.8,360.6 L159.6,348.5 L159.3,335.2 L164.3,334.9 L166.1,308.0 C165.8,306.9 165.1,303.0 164.1,301.5 C163.1,300.0 162.0,299.5 160.2,298.8 C158.4,298.1 155.9,297.6 153.5,297.5 C151.1,297.4 148.2,297.5 145.5,298.2 C142.8,298.9 140.0,299.9 137.6,301.5 C135.2,303.1 132.9,305.4 130.9,308.0 C128.9,310.6 127.1,313.7 125.6,317.2 C124.0,320.7 122.8,324.8 121.6,329.2 C120.4,333.6 119.2,338.7 118.3,343.8 C117.4,348.9 116.8,354.2 116.3,359.8 C115.8,365.4 115.7,374.2 115.6,377.1 Z" fill="url(#hatch)" stroke="#000" stroke-width="2.4" stroke-linejoin="round"/>
<path d="M966.2,377.1 C966.0,374.2 965.6,366.0 964.8,359.8 C964.0,353.6 962.9,346.5 961.5,339.8 C960.1,333.1 958.4,325.9 956.2,319.9 C954.0,313.9 951.1,308.0 948.2,303.9 C945.3,299.8 942.2,297.5 938.9,295.3 C935.6,293.1 932.1,291.6 928.3,290.6 C924.5,289.6 920.1,289.1 916.3,289.3 C912.5,289.5 908.7,290.7 905.7,292.0 C902.7,293.3 900.2,295.1 898.3,297.3 C896.4,299.5 895.1,301.5 894.3,305.3 C893.4,309.1 893.4,317.5 893.2,319.9 L893.0,360.6 L897.0,360.6 L910.2,348.5 L910.5,335.2 L905.5,334.9 L903.7,308.0 C904.0,306.9 904.7,303.0 905.7,301.5 C906.7,300.0 907.8,299.5 909.6,298.8 C911.4,298.1 913.8,297.6 916.3,297.5 C918.8,297.4 921.6,297.5 924.3,298.2 C926.9,298.9 929.8,299.9 932.2,301.5 C934.6,303.1 936.9,305.4 938.9,308.0 C940.9,310.6 942.6,313.7 944.2,317.2 C945.7,320.7 947.0,324.8 948.2,329.2 C949.4,333.6 950.6,338.7 951.5,343.8 C952.4,348.9 953.0,354.2 953.5,359.8 C954.0,365.4 954.1,374.2 954.2,377.1 Z" fill="url(#hatch)" stroke="#000" stroke-width="2.4" stroke-linejoin="round"/>
<!--/RING-->
<defs><radialGradient id="vcS" cx="0.5" cy="0.5" r="0.5"><stop offset="0" stop-color="#999" stop-opacity="0.55"/><stop offset="1" stop-color="#999" stop-opacity="0"/></radialGradient><linearGradient id="vcF" x1="0" y1="0" x2="0" y2="1"><stop offset="0" stop-color="#eeeeee"/><stop offset="1" stop-color="#dcdcdc"/></linearGradient></defs>
<ellipse cx="953" cy="135" rx="30" ry="7" fill="url(#vcS)"/>
<path d="M934.2,98l2.4,-6.2h33l2.6,6.2z" fill="#f2f2f2" stroke="#a8a8a8" stroke-width="0.8" stroke-dasharray="5 2"/>
<rect x="934.2" y="98" width="38" height="35.4" fill="url(#vcF)" stroke="#a8a8a8" stroke-width="0.8" stroke-dasharray="6 2.4"/>
<rect x="941" y="106" width="24" height="21" fill="#e4e5e8" opacity="0.8"/>
<path d="M946,94.8h12" stroke="#aaa" stroke-width="1" stroke-dasharray="2 1"/>
<path d="M969.2,86.5v5.6" stroke="#6a6af0" stroke-width="1.3"/><path d="M971.6,132v6" stroke="#5cc87a" stroke-width="1.3"/><path d="M932.6,121.5h1.6" stroke="#e89060" stroke-width="1"/>
</svg>
<div class="abs" id="design"></div>
<div class="abs" style="left:103.6px;top:22.6px;width:39px;height:2.2px;background:#1b8fd8"></div>
<div class="sep" style="left:286px"></div>
<div class="sep" style="left:510px"></div>
<div class="sep" style="left:579px"></div>
<div class="sep" style="left:650px"></div>
<div class="sep" style="left:707px"></div>
<div class="sep" style="left:757px"></div>
<div class="hdr" style="left:7.5px;top:69px;width:214.5px;height:17.6px"></div>
<div class="hdr" style="left:7.5px;top:625px;width:214.5px;height:17.6px"></div>
<div class="abs" id="navbar"></div>
<div class="abs" id="dlg"></div>
<div class="abs" style="left:768px;top:532px;width:177px;height:1px;background:#dadada"></div>
<div class="abs" style="left:768px;top:596px;width:177px;height:1px;background:#dadada"></div>
<div class="abs" style="left:813.8px;top:533.8px;width:41.4px;height:19.4px;background:#1594da;border-radius:1.5px"></div>
<div class="abs" style="left:844.2px;top:602.2px;width:43px;height:13.6px;background:#ececec;border:1px solid #c8c8c8"></div>
<div class="abs" style="left:894.1px;top:602.2px;width:43.4px;height:13.6px;background:#ececec;border:1px solid #c0c0c0"></div>
<div class="abs" id="tip"></div>
<div class="abs" id="timeline"></div>
<div class="abs" id="tcHdr"></div>
<div class="abs" id="tcBar"></div>
<div class="abs" id="tcArea"></div>
<div class="abs" id="tcInput"></div>

<div class="row" style="left:33.1px;top:90.7px;width:163.5px;height:13.5px"></div>
<div class="abs" style="left:51.4px;top:92.2px;width:127.6px;height:10.6px;background:#9b9b9b"></div>
<div class="row" style="left:46.1px;top:107.8px;width:95.7px;height:13.7px"></div>
<div class="row" style="left:46.1px;top:124.9px;width:78.4px;height:13.7px"></div>
<div class="row" style="left:46.1px;top:142.0px;width:67.9px;height:13.7px"></div>
<div class="row" style="left:46.1px;top:159.2px;width:79.4px;height:13.7px"></div>
<div class="row" style="left:46.1px;top:176.3px;width:73.8px;height:13.7px"></div>
<div class="row" style="left:58.7px;top:193.5px;width:71.0px;height:13.8px"></div>
<div class="row" style="left:46.1px;top:210.7px;width:81.8px;height:13.8px"></div>
<div class="row" style="left:46.1px;top:227.8px;width:93.4px;height:13.7px"></div>
<div class="t" style="left:112.4px;top:12px;font-size:8.14px;color:#1b8fd8;transform:translateY(0.00px) scaleX(0.843)">SOLID</div>
<div class="t" style="left:167.8px;top:12px;font-size:8.14px;color:#3e3e3e;transform:translateY(0.00px) scaleX(0.874)">SURFACE</div>
<div class="t" style="left:234.6px;top:12px;font-size:8.14px;color:#3e3e3e;transform:translateY(0.00px) scaleX(0.833)">MESH</div>
<div class="t" style="left:287.0px;top:12px;font-size:8.14px;color:#3e3e3e;transform:translateY(0.00px) scaleX(0.853)">SHEET METAL</div>
<div class="t" style="left:368.0px;top:12px;font-size:8.14px;color:#3e3e3e;transform:translateY(0.00px) scaleX(0.904)">TOOLS</div>
<div class="t" style="left:427.6px;top:12px;font-size:8.14px;color:#3e3e3e;transform:translateY(0.00px) scaleX(0.896)">MANAGE</div>
<div class="t" style="left:173.2px;top:55px;font-size:8.14px;color:#3e3e3e;transform:translateY(0.90px) scaleX(0.833)">CREATE</div>
<div class="t" style="left:380.9px;top:55px;font-size:8.14px;color:#3e3e3e;transform:translateY(0.90px) scaleX(0.862)">MODIFY</div>
<div class="t" style="left:522.3px;top:55px;font-size:8.14px;color:#3e3e3e;transform:translateY(0.90px) scaleX(0.886)">ASSEMBLE</div>
<div class="t" style="left:589.7px;top:55px;font-size:8.14px;color:#3e3e3e;transform:translateY(0.90px) scaleX(0.867)">CONSTRUCT</div>
<div class="t" style="left:661.0px;top:55px;font-size:8.14px;color:#3e3e3e;transform:translateY(0.90px) scaleX(0.822)">INSPECT</div>
<div class="t" style="left:717.5px;top:55px;font-size:8.14px;color:#3e3e3e;transform:translateY(0.90px) scaleX(0.852)">INSERT</div>
<div class="t" style="left:766.8px;top:55px;font-size:8.14px;color:#3e3e3e;transform:translateY(0.90px) scaleX(0.856)">SELECT</div>
<div class="t" style="left:35.0px;top:33px;font-size:8.14px;color:#333;font-weight:bold;transform:translateY(0.20px) scaleX(0.849)">DESIGN</div>
<div class="t" style="left:25.6px;top:73px;font-size:8.72px;color:#5a5a5a;transform:translateY(0.60px) scaleX(0.817)">BROWSER</div>
<div class="t" style="left:25.6px;top:629px;font-size:8.72px;color:#5a5a5a;transform:translateY(0.60px) scaleX(0.794)">COMMENTS</div>
<div class="t" style="left:22.4px;top:686px;font-size:8.72px;color:#5a5a5a;transform:translateY(0.40px) scaleX(0.825)">TEXT COMMANDS</div>
<div class="t" style="left:74.9px;top:93px;font-size:8.87px;color:#fff;font-weight:bold;transform:translateY(0.55px) scaleX(0.931)">718 bezel new clips A v2</div>
<div class="t" style="left:69.6px;top:110px;font-size:8.58px;color:#3a3a3a;transform:translateY(0.65px) scaleX(0.889)">Document Settings</div>
<div class="t" style="left:69.6px;top:127px;font-size:8.58px;color:#3a3a3a;transform:translateY(0.75px) scaleX(0.917)">Named Views</div>
<div class="t" style="left:87.6px;top:144px;font-size:8.58px;color:#3a3a3a;transform:translateY(0.85px) scaleX(0.870)">Origin</div>
<div class="t" style="left:87.7px;top:162px;font-size:8.58px;color:#3a3a3a;transform:translateY(0.05px) scaleX(0.933)">Analysis</div>
<div class="t" style="left:87.6px;top:179px;font-size:8.58px;color:#3a3a3a;transform:translateY(0.15px) scaleX(0.885)">Bodies</div>
<div class="t" style="left:100.7px;top:196px;font-size:8.58px;color:#3a3a3a;transform:translateY(0.40px) scaleX(0.876)">Body1</div>
<div class="t" style="left:87.6px;top:213px;font-size:8.58px;color:#3a3a3a;transform:translateY(0.60px) scaleX(0.899)">Sketches</div>
<div class="t" style="left:87.6px;top:230px;font-size:8.58px;color:#3a3a3a;transform:translateY(0.65px) scaleX(0.901)">Construction</div>
<div class="t" style="left:784.6px;top:519px;font-size:8.43px;color:#5a5a5a;transform:translateY(0.40px) scaleX(0.863)">SECTION ANALYSIS</div>
<div class="t" style="left:776.0px;top:539px;font-size:8.72px;color:#3a3a3a;transform:translateY(0.40px) scaleX(0.887)">Face</div>
<div class="t" style="left:829.4px;top:539px;font-size:8.72px;color:#fff;transform:translateY(0.40px) scaleX(0.899)">Select</div>
<div class="t" style="left:859.6px;top:605px;font-size:8.72px;color:#b0b0b0;transform:translateY(0.00px) scaleX(0.904)">OK</div>
<div class="t" style="left:901.6px;top:605px;font-size:8.72px;color:#3a3a3a;transform:translateY(0.00px) scaleX(1.024)">Cancel</div>
<div class="t" style="left:8.0px;top:777px;font-size:8.72px;color:#757575;transform:translateY(0.00px) scaleX(0.872)">Type Text Commands Here - Type &#39;?&#39; or &#39;??&#39; For Help</div>
<div class="t" style="left:931.0px;top:777px;font-size:8.72px;color:#333;transform:translateY(0.00px) scaleX(0.941)">Txt</div>
<div class="t" style="left:960.0px;top:777px;font-size:8.72px;color:#333;transform:translateY(0.00px) scaleX(0.845)">Py</div>
<div class="t" style="left:987.0px;top:777px;font-size:8.72px;color:#333;transform:translateY(0.00px) scaleX(0.757)">Js</div>
<div class="t" style="left:606.6px;top:275px;font-size:9.30px;color:#111;transform:translateY(0.70px) scaleX(0.836)">Select plane or planar face to define section</div>
<div class="t" style="left:942.8px;top:111px;font-size:11.05px;color:#9a9ca2;font-weight:bold;transform:translateY(0.20px) scaleX(0.639)">BACK</div>
<div class="t" style="left:966.4px;top:76px;font-size:11.05px;color:#6a6af0;transform:translateY(0.40px) scaleX(0.830)">Z</div>
<div class="t" style="left:926.0px;top:116px;font-size:10.17px;color:#e89060;transform:translateY(0.60px) scaleX(0.795)">X</div>
<div class="t" style="left:971.0px;top:134px;font-size:9.59px;color:#5cc87a;transform:translateY(0.60px) scaleX(0.781)">Y</div>
<div class="t" style="left:449.0px;top:-7px;font-size:9.59px;color:#444;transform:translateY(0.40px) scaleX(0.885)">718 bezel new clips A v2</div>
<svg class="abs" id="icons" style="left:0;top:0" width="1000" height="790" viewBox="0 0 1000 790">
<g stroke-linejoin="round">
<!-- 1 sketch -->
<g fill="none" stroke="#6a6a6a" stroke-width="1">
<path d="M103.6,27.8H123V40M103.6,27.8V47.1H115"/>
<path d="M108.6,32.4H118M108.6,32.4V42" stroke-dasharray="2.5 1"/>
<path d="M118,32.4C118,38 114,42 108.6,42"/>
</g>
<g fill="#333"><rect x="102.5" y="26.7" width="2.2" height="2.2"/><rect x="121.9" y="26.7" width="2.2" height="2.2"/><rect x="102.5" y="46" width="2.2" height="2.2"/><rect x="107.6" y="31.4" width="2" height="2"/><rect x="117" y="31.4" width="2" height="2"/><rect x="107.6" y="41" width="2" height="2"/></g>
<path d="M118.9,39.2h3.1v3.9h3.9v3.1h-3.9v3.9h-3.1v-3.9h-3.9v-3.1h3.9z" fill="#2fa84f"/>
<!-- 2 extrude -->
<path d="M134.4,45.5h13.6l3.8,-2.9v2.9l-3.8,2.9h-13.6z" fill="#c4c4c4"/>
<path d="M134.4,45.5h13.6v2.9h-13.6z" fill="#d6d6d6"/>
<path d="M134.4,31.6h13.6v13.9h-13.6z" fill="#6ab1e7"/>
<path d="M134.4,31.6l4,-4.3h13.4l-3.8,4.3z" fill="#85c4f2"/>
<path d="M148,31.6l3.8,-4.3v15.4l-3.8,2.8z" fill="#4a96d6"/>
<path d="M154,44.6V29" stroke="#333" stroke-width="1" fill="none"/><path d="M154,27l1.8,3.4h-3.6z" fill="#333"/>
<!-- 3 revolve -->
<path d="M164.2,38.2C170,32 180,31 186.8,36.4L186.8,44 183.4,46.6C178,43 172,43.5 168.4,47Z" fill="#6ab1e7"/>
<path d="M164.2,38.2C170,32 180,31 186.8,36.4L183.4,39.2C178,36 172,36.6 168.2,40Z" fill="#85c4f2"/>
<path d="M164.2,38.2L168.2,40V47L164.2,44.6Z" fill="#4a96d6"/>
<path d="M183.4,39.4L186.8,36.6V44L183.4,46.6Z" fill="#fff" stroke="#555" stroke-width="0.8"/>
<path d="M185,31.4C180,27.2 171.5,27.2 166.3,30.8" fill="none" stroke="#333" stroke-width="1"/><path d="M164.6,32.2l3.6,-2.4l0.6,2.9z" fill="#333"/>
<!-- 4 hole -->
<path d="M195.3,32.1l5.3,-5.3h17.2l-4.8,5.3z" fill="#f4f4f4" stroke="#8e8e8e" stroke-width="0.9"/>
<path d="M213,32.1l4.8,-5.3v17.3l-4.8,4.8z" fill="#bdbdbd" stroke="#8e8e8e" stroke-width="0.9"/>
<path d="M195.3,32.1h17.7v16.8h-17.7z" fill="#e2e2e2" stroke="#8e8e8e" stroke-width="0.9"/>
<circle cx="204.4" cy="40.7" r="6" fill="#c8c8c8" stroke="#8a8a8a" stroke-width="0.8"/>
<circle cx="204.2" cy="40.9" r="4.7" fill="#5aa9e6"/>
<path d="M203.4,36.6a4.7,4.7 0 0 1 5.4,5.6a4.6,4.6 0 0 1 -5.4,-5.6z" fill="#fff"/>
<!-- 5 pattern -->
<path d="M231,30.4h10M228.4,32.8v10.4M231,45.5h10" stroke="#6a6a6a" stroke-width="1" fill="none"/>
<rect x="226" y="28.2" width="4.8" height="4.5" fill="#fff" stroke="#555" stroke-width="0.9"/>
<rect x="241.2" y="28.2" width="4.8" height="4.5" fill="#4ea3e0"/>
<rect x="226" y="43.3" width="4.8" height="4.5" fill="#4ea3e0"/>
<rect x="241.2" y="43.3" width="4.8" height="4.5" fill="#4ea3e0"/>
<!-- 6 form -->
<path d="M257,36C257,30 261,28 267,28.2C273,28.2 277.5,31 278,37C278.5,44 277,48.5 271,49.5C264,50.5 258,49.5 257,45Z" fill="#ad88e4"/>
<path d="M273,36C276,34.5 278,36 278,39.5C278,43.5 276.6,46 274.4,45.6C272.4,44 272.2,39 273,36Z" fill="#7c5cb4"/>
<path d="M259,40.5h13M266,30.5v18" stroke="#8a68c4" stroke-width="0.7" fill="none" stroke-dasharray="1.5 1"/>
<path d="M273.5,26.4l1.2,3 2.9,-1.5 -1,3.1 3.2,1 -3,1.4 1.5,2.9 -3.1,-1 -1.4,3.1 -1.3,-3.1 -3,1.3 1.3,-3 -3.1,-1.3 3.1,-1.2 -1.2,-3.1 3,1.3z" fill="#f4a51e"/>
<!-- 7 press pull -->
<path d="M296.5,32.5L300.5,27H304.8L301.4,32.5V49H297.4C296.8,49 296.5,48.6 296.5,48Z" fill="#e4e4e4" stroke="#8e8e8e" stroke-width="0.9"/>
<path d="M301.4,31.1h7.2v18.2h-7.2z" fill="#6ab1e7"/>
<path d="M301.4,31.1l3.4,-4.3h6.7l-2.9,4.3z" fill="#85c4f2"/>
<path d="M308.6,31.1l2.9,-4.3v18.7l-2.9,3.8z" fill="#4a96d6"/>
<path d="M310.4,37.4h4.5" stroke="#333" stroke-width="1.1" fill="none"/><path d="M317,37.4l-3.4,-1.9v3.8z" fill="#333"/>
<rect x="309.6" y="36.4" width="1.6" height="2" fill="#ddd"/>
<!-- 8 fillet -->
<path d="M326.4,32.6L331.2,26.8H338.8L335,32Z" fill="#f2f2f2" stroke="#8e8e8e" stroke-width="0.9"/>
<path d="M343.7,41.2L349,37.4V44L343.7,49Z" fill="#bdbdbd" stroke="#8e8e8e" stroke-width="0.9"/>
<path d="M326.4,32.6H334.6C340,32.6 343.7,36.4 343.7,41.2V49H327.4C326.8,49 326.4,48.6 326.4,48Z" fill="#e2e2e2" stroke="#8e8e8e" stroke-width="0.9"/>
<path d="M335,31.6C340.5,32 344,35.6 344.6,41L349,36.6C347.6,30.4 344,27.2 338.8,26.8Z" fill="#6ab1e7"/>
<!-- 9 shell -->
<path d="M357.3,32.1l4.6,-5.3h17.8l-5.3,5.3z" fill="#f4f4f4" stroke="#8e8e8e" stroke-width="0.9"/>
<path d="M374.4,32.1l5.3,-5.3v17.3l-5.3,5z" fill="#bdbdbd" stroke="#8e8e8e" stroke-width="0.9"/>
<path d="M357.3,32.1h17.1v17h-17.1z" fill="#e2e2e2" stroke="#8e8e8e" stroke-width="0.9"/>
<rect x="360" y="35" width="11.5" height="11.5" fill="#f6f6f6"/>
<path d="M360,35.4h4.8v11.1h-4.8z" fill="#3d8dd0"/>
<path d="M364.8,41.2h6.3v5.3h-11.1z" fill="#7ec0f2"/>
<!-- 10 combine -->
<path d="M396.4,30.2l2.9,-3.4h11.5l-2.9,3.4z" fill="#85c4f2"/>
<path d="M407.9,30.2l2.9,-3.4v12l-2.9,2.9z" fill="#4a96d6"/>
<path d="M396.4,30.2h11.5v11.5h-11.5z" fill="#6ab1e7"/>
<path d="M388,36.4l2.7,-2.4h5.7v2.4z" fill="#85c4f2"/>
<path d="M388,36.4h13.2v13h-13.2z" fill="#6ab1e7"/>
<path d="M401.2,41.7l2.9,-1.6v6.4l-2.9,2.9z" fill="#4a96d6"/>
<path d="M401.2,41.7h6.7l-2.6,-1.6h-1.2z" fill="#6ab1e7"/>
<!-- 11 offset face -->
<path d="M420.4,31.1l3.8,-4.3h15.9l-3.4,4.3z" fill="#85c4f2"/>
<path d="M436.7,31.1l3.4,-4.3v6.7l-3.4,3.9z" fill="#4a96d6"/>
<path d="M420.4,31.1h16.3v6.3h-16.3z" fill="#6ab1e7"/>
<path d="M418.5,39.8h19.2l4.3,-5.3" fill="none" stroke="#4ea3e0" stroke-width="1"/>
<path d="M420.4,40.8h16.3l3.4,-3v6.8l-3.4,3.5h-16.3z" fill="#c0c0c0" stroke="#8e8e8e" stroke-width="0.8"/>
<path d="M420.4,40.8h16.3v7.3h-16.3z" fill="#e2e2e2" stroke="#8e8e8e" stroke-width="0.8"/>
<!-- 12 move -->
<path d="M460.9,30v15.6M453,37.8h15.8" stroke="#333" stroke-width="2" fill="none"/>
<path d="M460.9,26.4l3.6,5h-7.2zM460.9,49.2l3.6,-5h-7.2zM449.5,37.8l5,-3.6v7.2zM472.3,37.8l-5,-3.6v7.2z" fill="#333"/>
<!-- 13 chamfer -->
<path d="M480.4,32.4L485.9,26.4H492.6L488.5,32.4Z" fill="#f2f2f2" stroke="#8e8e8e" stroke-width="0.9"/>
<path d="M497.8,41.8L503.2,37V43.6L497.8,49.2Z" fill="#bdbdbd" stroke="#8e8e8e" stroke-width="0.9"/>
<path d="M480.4,32.4H488.5L497.8,41.8V49.2H481.4C480.8,49.2 480.4,48.8 480.4,48.2Z" fill="#e2e2e2" stroke="#8e8e8e" stroke-width="0.9"/>
<path d="M488.5,32.4L492.6,26.4L503.2,36L497.8,41.8Z" fill="#5aa9e6"/>
<!-- 14 new component -->
<path d="M519.2,32.4l2.6,-3.1h9.4l-1,3.1z" fill="#85c4f2"/>
<path d="M519.2,32.4h10.9v8.8h-10.9z" fill="#5aa9e6"/>
<path d="M530.1,32.4l1.1,-3.1v8.6l-1.1,1.2z" fill="#4a96d6"/>
<path d="M519.2,41.2h7.8v8h-7.8z" fill="#e2e2e2" stroke="#969696" stroke-width="0.8"/>
<path d="M527.5,41.2l2.6,-3.1h8.8l-2.6,3.1z" fill="#f4f4f4" stroke="#969696" stroke-width="0.8"/>
<path d="M536.3,41.2l2.6,-3.1v8.3l-2.6,2.8z" fill="#bdbdbd" stroke="#969696" stroke-width="0.8"/>
<path d="M527.5,41.2h8.8v8h-8.8z" fill="#e2e2e2" stroke="#969696" stroke-width="0.8"/>
<path d="M535.8,26.2l1.3,3.3 3.1,-1.6 -1.1,3.3 3.4,1.1 -3.2,1.5 1.6,3.1 -3.3,-1.1 -1.5,3.3 -1.4,-3.3 -3.2,1.4 1.4,-3.2 -3.3,-1.4 3.3,-1.3 -1.3,-3.3 3.2,1.4z" fill="#f4a51e"/>
<!-- 15 joint -->
<path d="M551.4,34.5L556.6,28.4H560.2V35.5L556.6,37.1V44.4L551.4,47.5Z" fill="#d2d2d2" stroke="#8e8e8e" stroke-width="0.9"/>
<path d="M556.6,28.4l-1.8,2v15l1.8,-1" fill="#b4b4b4" stroke="none"/>
<path d="M562.8,37.6L566.5,29.8L571.2,34V47.5L562.8,41.8Z" fill="#d2d2d2" stroke="#8e8e8e" stroke-width="0.9"/>
<path d="M564.6,32.6v4M558.6,38v3" stroke="#4ea3e0" stroke-width="1.1" fill="none"/>
<!-- 16 construct -->
<path d="M605.2,33L610.9,26.6H616.9L610.9,33Z" fill="#f4f4f4" stroke="#8e8e8e" stroke-width="0.9"/>
<path d="M605.2,33h5.7v15.4h-5.7z" fill="#e2e2e2" stroke="#8e8e8e" stroke-width="0.9"/>
<path d="M610.9,33l6.6,-6.2v15.5l-6.6,6.1z" fill="#5ec27a"/>
<path d="M619.9,33.6l6.4,-6.6v14.8l-6.4,6.6z" fill="#e8935a"/>
<!-- 17 inspect -->
<path d="M669.4,32.5v6.2M689.6,32.5v6.2" stroke="#9a9a9a" stroke-width="0.9" fill="none"/>
<path d="M671.5,35.4h16" stroke="#444" stroke-width="0.9" fill="none"/>
<path d="M670.2,35.4l2.9,-1.5v3zM688.8,35.4l-2.9,-1.5v3z" fill="#444"/>
<rect x="669.4" y="39.4" width="20.2" height="4.2" fill="#f5a71c"/>
<path d="M671,39.4v2M673,39.4v1.4M675,39.4v2M677,39.4v1.4M679,39.4v2M681,39.4v1.4M683,39.4v2M685,39.4v1.4M687,39.4v2M688.6,39.4v1.4" stroke="#b87808" stroke-width="0.7" fill="none"/>
<!-- 18 insert -->
<rect x="722" y="27.3" width="20.4" height="20.6" fill="#86c6f4"/>
<path d="M722,41L728.6,36L733.5,42L737.5,39L742.4,43.5V47.9H722Z" fill="#3d8dd0"/>
<circle cx="736.9" cy="33" r="2" fill="#fff4cc"/>
<!-- 19 select -->
<rect x="772.8" y="26.8" width="19.6" height="15.4" fill="none" stroke="#62c47c" stroke-width="1.4" stroke-dasharray="2.6 1.7" rx="1.5"/>
<path d="M788.2,37.2V47.6L790.6,45.4L792.2,49L794,48.2L792.4,44.8H795.4Z" fill="#fff" stroke="#444" stroke-width="0.9"/>
</g>

<path d="M19.4,101.2L26.6,101.2L26.6,93.9Z" fill="#9a9a9a" stroke="#3a3a3a" stroke-width="1.2" stroke-linejoin="round"/>
<path d="M35.0,97.5C37.6,92.9 44.0,92.9 46.6,97.5C44.0,102.0 37.6,102.0 35.0,97.5Z" fill="#9a9a9a"/><circle cx="40.8" cy="97.5" r="2.1" fill="none" stroke="#dadada" stroke-width="1.1"/>
<path d="M53.6,94.4l2.4,-2.2h8.6v8.4l-2.4,2.4h-8.6z" fill="#fff" stroke="#3c3c3c" stroke-width="1" stroke-linejoin="round"/><path d="M53.6,94.4h8.6v8.6M62.2,94.4l2.4,-2.2" fill="none" stroke="#c8c8c8" stroke-width="0.7"/><rect x="54.4" y="95.2" width="7" height="7" fill="#e8e8ec"/>
<circle cx="186" cy="97.4" r="4.3" fill="#fff" stroke="#333" stroke-width="1"/><circle cx="186" cy="97.4" r="1.9" fill="#222"/>
<path d="M33.6,110.6L39.6,115.1L33.6,119.6Z" fill="#fff" stroke="#505050" stroke-width="1.15" stroke-linejoin="round"/>
<path d="M59.47,113.43L59.47,115.87L57.80,115.99L57.64,116.39L58.73,117.65L57.00,119.38L55.74,118.29L55.34,118.45L55.22,120.12L52.78,120.12L52.66,118.45L52.26,118.29L51.00,119.38L49.27,117.65L50.36,116.39L50.20,115.99L48.53,115.87L48.53,113.43L50.20,113.31L50.36,112.91L49.27,111.65L51.00,109.92L52.26,111.01L52.66,110.85L52.78,109.18L55.22,109.18L55.34,110.85L55.74,111.01L57.00,109.92L58.73,111.65L57.64,112.91L57.80,113.31Z" fill="#8c8c8c"/><circle cx="54.0" cy="114.7" r="2.2" fill="#f0f0f0"/>
<path d="M33.6,127.7L39.6,132.2L33.6,136.7Z" fill="#fff" stroke="#505050" stroke-width="1.15" stroke-linejoin="round"/>
<path d="M48.2,127.2h4.6v1.3h6.9v7.7h-11.5z" fill="#939393"/><path d="M53.0,128.9h6.4" stroke="#f0f0f0" stroke-width="0.5"/>
<path d="M33.6,144.8L39.6,149.2L33.6,153.8Z" fill="#fff" stroke="#505050" stroke-width="1.15" stroke-linejoin="round"/>
<path d="M48.4,148.8C50.8,144.7 56.8,144.7 59.2,148.8C56.8,153.0 50.8,153.0 48.4,148.8Z" fill="none" stroke="#c2c2c2" stroke-width="1.1"/><circle cx="53.8" cy="148.8" r="2" fill="none" stroke="#c2c2c2" stroke-width="1"/><path d="M50.2,144.8L57.4,152.8" stroke="#c2c2c2" stroke-width="1.1"/>
<path d="M66.0,144.3h4.6v1.3h6.9v7.7h-11.5z" fill="#939393"/><path d="M70.8,146.0h6.4" stroke="#f0f0f0" stroke-width="0.5"/>
<path d="M33.6,162.0L39.6,166.5L33.6,171.0Z" fill="#fff" stroke="#505050" stroke-width="1.15" stroke-linejoin="round"/>
<path d="M48.0,166.1C50.6,161.5 57.0,161.5 59.6,166.1C57.0,170.7 50.6,170.7 48.0,166.1Z" fill="#9a9a9a"/><circle cx="53.8" cy="166.1" r="2.1" fill="none" stroke="#dadada" stroke-width="1.1"/>
<path d="M66.0,161.6h4.6v1.3h6.9v7.7h-11.5z" fill="#939393"/><path d="M70.8,163.2h6.4" stroke="#f0f0f0" stroke-width="0.5"/>
<path d="M32.6,187.0L39.8,187.0L39.8,179.6Z" fill="#9a9a9a" stroke="#3a3a3a" stroke-width="1.2" stroke-linejoin="round"/>
<path d="M48.0,183.2C50.6,178.6 57.0,178.6 59.6,183.2C57.0,187.8 50.6,187.8 48.0,183.2Z" fill="#9a9a9a"/><circle cx="53.8" cy="183.2" r="2.1" fill="none" stroke="#dadada" stroke-width="1.1"/>
<path d="M66.0,178.7h4.6v1.3h6.9v7.7h-11.5z" fill="#939393"/><path d="M70.8,180.3h6.4" stroke="#f0f0f0" stroke-width="0.5"/>
<path d="M60.8,200.4C63.4,195.8 69.8,195.8 72.4,200.4C69.8,205.0 63.4,205.0 60.8,200.4Z" fill="#9a9a9a"/><circle cx="66.6" cy="200.4" r="2.1" fill="none" stroke="#dadada" stroke-width="1.1"/>
<rect x="79.6" y="194.9" width="11" height="11" rx="2.4" fill="#fff" stroke="#4a4a5a" stroke-width="1"/><rect x="81.6" y="198.0" width="5.4" height="6.6" fill="#dcdce2"/><rect x="87" y="198.0" width="1.8" height="6.6" fill="#c4c4cc"/>
<path d="M33.6,213.5L39.6,218.0L33.6,222.5Z" fill="#fff" stroke="#505050" stroke-width="1.15" stroke-linejoin="round"/>
<path d="M48.0,217.6C50.6,213.0 57.0,213.0 59.6,217.6C57.0,222.2 50.6,222.2 48.0,217.6Z" fill="#9a9a9a"/><circle cx="53.8" cy="217.6" r="2.1" fill="none" stroke="#dadada" stroke-width="1.1"/>
<path d="M66.0,213.1h4.6v1.3h6.9v7.7h-11.5z" fill="#939393"/><path d="M70.8,214.8h6.4" stroke="#f0f0f0" stroke-width="0.5"/>
<path d="M33.6,230.6L39.6,235.1L33.6,239.6Z" fill="#fff" stroke="#505050" stroke-width="1.15" stroke-linejoin="round"/>
<path d="M48.0,234.7C50.6,230.1 57.0,230.1 59.6,234.7C57.0,239.2 50.6,239.2 48.0,234.7Z" fill="#9a9a9a"/><circle cx="53.8" cy="234.7" r="2.1" fill="none" stroke="#dadada" stroke-width="1.1"/>
<path d="M66.0,230.2h4.6v1.3h6.9v7.7h-11.5z" fill="#939393"/><path d="M70.8,231.8h6.4" stroke="#f0f0f0" stroke-width="0.5"/>
<path d="M11,77.7l3.4,-2.5v5zM14.8,77.7l3.4,-2.5v5z" fill="#333" transform="translate(0,0)"/>
<circle cx="210.0" cy="77.6" r="3.5" fill="#222"/><path d="M208.0,77.6h4" stroke="#fff" stroke-width="1.1"/>
<rect x="219" y="73.4" width="1.2" height="8.4" fill="#c4c4c4"/>
<circle cx="210.0" cy="633.7" r="3.5" fill="#222"/><path d="M208.0,633.7h4" stroke="#fff" stroke-width="1.1"/><path d="M210.0,631.7v4" stroke="#fff" stroke-width="1.1"/>
<rect x="219" y="629.6" width="1.2" height="8.4" fill="#c4c4c4"/>
<circle cx="12.0" cy="690.5" r="3.5" fill="#222"/><path d="M10.0,690.5h4" stroke="#fff" stroke-width="1.1"/>
<circle cx="774.2" cy="523.4" r="3.5" fill="#222"/><path d="M772.2,523.4h4" stroke="#fff" stroke-width="1.1"/>
<circle cx="777.6" cy="609.5" r="4.3" fill="#111"/><rect x="776.9" y="608.8" width="1.4" height="3.2" fill="#fff"/><rect x="776.9" y="606.6" width="1.4" height="1.4" fill="#fff"/>
<path d="M820.6,538.6v9.2l2.1,-1.9l1.5,3.2l1.5,-0.7l-1.5,-3.1h2.8z" fill="#ececec" stroke="#555" stroke-width="0.8" stroke-linejoin="round"/>
<g fill="#333">
<rect x="12.2" y="659.4" width="1.5" height="10.2"/><path d="M21,659.4v10.2l-7.2,-5.1z"/>
<path d="M37,659.6v9.8l-7.2,-4.9z"/><rect x="37" y="662" width="2.2" height="5"/>
<path d="M48.2,658.8v11.4l8.4,-5.7z"/>
<path d="M67,659.6v9.8l7.4,-4.9z"/><rect x="64.8" y="662" width="2.2" height="5"/>
<path d="M84.2,659.4v10.2l7.2,-5.1z"/><rect x="91.4" y="659.4" width="1.5" height="10.2"/>
</g>
<g transform="translate(109.0,658.2)"><path d="M1,1H10.4V6M1,1V10.4H6.6" fill="none" stroke="#808080" stroke-width="0.9" stroke-dasharray="2.2 0.8"/><g fill="#2f9ae8"><rect x="0" y="0" width="2" height="2"/><rect x="9.4" y="0" width="2" height="2"/><rect x="0" y="9.4" width="2" height="2"/></g><path d="M6.9,10.8l0.4,-1.5 3.4,-3.4 1.1,1.1 -3.4,3.4z" fill="#f3a83a"/><path d="M10.7,5.9l0.7,-0.7 1.1,1.1 -0.7,0.7z" fill="#e8604a"/><path d="M6.9,10.8l0.2,-0.8 0.6,0.6z" fill="#555"/></g>
<g transform="translate(126.1,658.2)"><path d="M0.5,9.1h7.4l1.3,-0.9v1.6l-1.3,1.1h-7.4z" fill="#c2c2c2"/><path d="M0.5,9.1h7.4v1.8h-7.4z" fill="#d8d8d8"/><path d="M0.5,2.3h7.4v6.8h-7.4z" fill="#5aa9e6"/><path d="M0.5,2.3l1.3,-2h7.4l-1.3,2z" fill="#8cc8f4"/><path d="M7.9,2.3l1.3,-2v7.9l-1.3,0.9z" fill="#3d8dd0"/><path d="M11.1,8.8V2" stroke="#333" stroke-width="0.8"/><path d="M11.1,0.8l1.1,1.9h-2.2z" fill="#333"/></g>
<g transform="translate(143.3,658.2)"><path d="M0.6,6.4L6.2,0.6H8.6C10.4,0.6 11.6,1.8 11.6,3.6V10.2L10.4,11.4H3.4C1.6,11.4 0.6,10 0.6,8.6Z" fill="#e0e0e0" stroke="#808080" stroke-width="0.8"/><path d="M0.9,5.6L5.8,0.5L9.2,2L2.9,8Z" fill="#4ea3e4"/></g>
<g transform="translate(160.4,658.2)"><path d="M0.6,3.4C0.6,1.6 1.8,0.6 3.4,0.6H6.2C9.4,0.6 11.6,2.8 11.6,6V10.2L10.4,11.4H0.6Z" fill="#e0e0e0" stroke="#808080" stroke-width="0.8"/><path d="M5.4,0.4H6.4C9.6,0.4 11.8,2.8 11.8,6V6.8L9.4,7.4C9.2,4.6 7.8,3.2 5,2.8Z" fill="#4ea3e4"/></g>
<g transform="translate(177.5,658.2)"><path d="M0.6,3.4C0.6,1.6 1.8,0.6 3.4,0.6H6.2C9.4,0.6 11.6,2.8 11.6,6V10.2L10.4,11.4H0.6Z" fill="#e0e0e0" stroke="#808080" stroke-width="0.8"/><path d="M5.4,0.4H6.4C9.6,0.4 11.8,2.8 11.8,6V6.8L9.4,7.4C9.2,4.6 7.8,3.2 5,2.8Z" fill="#4ea3e4"/></g>
<g transform="translate(194.6,658.2)"><path d="M1,1H10.4V6M1,1V10.4H6.6" fill="none" stroke="#808080" stroke-width="0.9" stroke-dasharray="2.2 0.8"/><g fill="#2f9ae8"><rect x="0" y="0" width="2" height="2"/><rect x="9.4" y="0" width="2" height="2"/><rect x="0" y="9.4" width="2" height="2"/></g><path d="M6.9,10.8l0.4,-1.5 3.4,-3.4 1.1,1.1 -3.4,3.4z" fill="#f3a83a"/><path d="M10.7,5.9l0.7,-0.7 1.1,1.1 -0.7,0.7z" fill="#e8604a"/><path d="M6.9,10.8l0.2,-0.8 0.6,0.6z" fill="#555"/></g>
<g transform="translate(211.8,658.2)"><path d="M0.5,9.1h7.4l1.3,-0.9v1.6l-1.3,1.1h-7.4z" fill="#c2c2c2"/><path d="M0.5,9.1h7.4v1.8h-7.4z" fill="#d8d8d8"/><path d="M0.5,2.3h7.4v6.8h-7.4z" fill="#5aa9e6"/><path d="M0.5,2.3l1.3,-2h7.4l-1.3,2z" fill="#8cc8f4"/><path d="M7.9,2.3l1.3,-2v7.9l-1.3,0.9z" fill="#3d8dd0"/><path d="M11.1,8.8V2" stroke="#333" stroke-width="0.8"/><path d="M11.1,0.8l1.1,1.9h-2.2z" fill="#333"/></g>
<g transform="translate(228.9,658.2)"><path d="M0.6,3.4C0.6,1.6 1.8,0.6 3.4,0.6H6.2C9.4,0.6 11.6,2.8 11.6,6V10.2L10.4,11.4H0.6Z" fill="#e0e0e0" stroke="#808080" stroke-width="0.8"/><path d="M5.4,0.4H6.4C9.6,0.4 11.8,2.8 11.8,6V6.8L9.4,7.4C9.2,4.6 7.8,3.2 5,2.8Z" fill="#4ea3e4"/></g>
<g transform="translate(246.0,658.2)"><path d="M0.6,2.8l2.2,-2.2h8.8v8.4l-2.2,2.4h-8.8z" fill="#e4e4e4" stroke="#7a7a7a" stroke-width="0.8"/><path d="M0.6,2.8h8.8v8.6M9.4,2.8l2.2,-2.2" fill="none" stroke="#7a7a7a" stroke-width="0.6"/><rect x="2.2" y="4.4" width="5.8" height="5.6" fill="#f6f6f6"/><path d="M2.2,5h2.6v5h-2.6z" fill="#3d8dd0"/><path d="M4.8,7.6h3.2v2.4h-5.8z" fill="#7ec0f2"/></g>
<g transform="translate(263.2,658.2)"><path d="M1,1H10.4V6M1,1V10.4H6.6" fill="none" stroke="#808080" stroke-width="0.9" stroke-dasharray="2.2 0.8"/><g fill="#2f9ae8"><rect x="0" y="0" width="2" height="2"/><rect x="9.4" y="0" width="2" height="2"/><rect x="0" y="9.4" width="2" height="2"/></g><path d="M6.9,10.8l0.4,-1.5 3.4,-3.4 1.1,1.1 -3.4,3.4z" fill="#f3a83a"/><path d="M10.7,5.9l0.7,-0.7 1.1,1.1 -0.7,0.7z" fill="#e8604a"/><path d="M6.9,10.8l0.2,-0.8 0.6,0.6z" fill="#555"/></g>
<g transform="translate(280.3,658.2)"><path d="M0.5,9.1h7.4l1.3,-0.9v1.6l-1.3,1.1h-7.4z" fill="#c2c2c2"/><path d="M0.5,9.1h7.4v1.8h-7.4z" fill="#d8d8d8"/><path d="M0.5,2.3h7.4v6.8h-7.4z" fill="#5aa9e6"/><path d="M0.5,2.3l1.3,-2h7.4l-1.3,2z" fill="#8cc8f4"/><path d="M7.9,2.3l1.3,-2v7.9l-1.3,0.9z" fill="#3d8dd0"/><path d="M11.1,8.8V2" stroke="#333" stroke-width="0.8"/><path d="M11.1,0.8l1.1,1.9h-2.2z" fill="#333"/></g>
<g transform="translate(297.4,658.2)"><path d="M0.5,9.1h7.4l1.3,-0.9v1.6l-1.3,1.1h-7.4z" fill="#c2c2c2"/><path d="M0.5,9.1h7.4v1.8h-7.4z" fill="#d8d8d8"/><path d="M0.5,2.3h7.4v6.8h-7.4z" fill="#5aa9e6"/><path d="M0.5,2.3l1.3,-2h7.4l-1.3,2z" fill="#8cc8f4"/><path d="M7.9,2.3l1.3,-2v7.9l-1.3,0.9z" fill="#3d8dd0"/><path d="M11.1,8.8V2" stroke="#333" stroke-width="0.8"/><path d="M11.1,0.8l1.1,1.9h-2.2z" fill="#333"/></g>
<g transform="translate(314.6,658.2)"><path d="M0.6,3.6l3,-3.2h3l-3,3.2z" fill="#f4f4f4" stroke="#6a6a6a" stroke-width="0.7"/><path d="M0.6,3.6h3v7.8h-3z" fill="#e2e2e2" stroke="#6a6a6a" stroke-width="0.7"/><path d="M3.6,3.6l3.4,-3.2v7.8l-3.4,3.2z" fill="#5ec27a"/><path d="M8,3.6l3.4,-3.4v7.6l-3.4,3.4z" fill="#e8935a"/></g>
<g transform="translate(331.7,658.2)"><path d="M1,1H10.4V6M1,1V10.4H6.6" fill="none" stroke="#808080" stroke-width="0.9" stroke-dasharray="2.2 0.8"/><g fill="#2f9ae8"><rect x="0" y="0" width="2" height="2"/><rect x="9.4" y="0" width="2" height="2"/><rect x="0" y="9.4" width="2" height="2"/></g><path d="M6.9,10.8l0.4,-1.5 3.4,-3.4 1.1,1.1 -3.4,3.4z" fill="#f3a83a"/><path d="M10.7,5.9l0.7,-0.7 1.1,1.1 -0.7,0.7z" fill="#e8604a"/><path d="M6.9,10.8l0.2,-0.8 0.6,0.6z" fill="#555"/></g>
<g transform="translate(348.8,658.2)"><path d="M0.5,9.1h7.4l1.3,-0.9v1.6l-1.3,1.1h-7.4z" fill="#c2c2c2"/><path d="M0.5,9.1h7.4v1.8h-7.4z" fill="#d8d8d8"/><path d="M0.5,2.3h7.4v6.8h-7.4z" fill="#5aa9e6"/><path d="M0.5,2.3l1.3,-2h7.4l-1.3,2z" fill="#8cc8f4"/><path d="M7.9,2.3l1.3,-2v7.9l-1.3,0.9z" fill="#3d8dd0"/><path d="M11.1,8.8V2" stroke="#333" stroke-width="0.8"/><path d="M11.1,0.8l1.1,1.9h-2.2z" fill="#333"/></g>
<g transform="translate(365.9,658.2)"><path d="M0.6,6.4L6.2,0.6H8.6C10.4,0.6 11.6,1.8 11.6,3.6V10.2L10.4,11.4H3.4C1.6,11.4 0.6,10 0.6,8.6Z" fill="#e0e0e0" stroke="#808080" stroke-width="0.8"/><path d="M0.9,5.6L5.8,0.5L9.2,2L2.9,8Z" fill="#4ea3e4"/></g>
<path d="M115.3,672.4V676.1H372.4V672.4M132.4,672.4V676.1M149.6,672.4V676.1M166.7,672.4V676.1M183.8,672.4V676.1M200.9,672.4V676.1M218.1,672.4V676.1M235.2,672.4V676.1M252.3,672.4V676.1M269.5,672.4V676.1M286.6,672.4V676.1M303.7,672.4V676.1M320.9,672.4V676.1M338.0,672.4V676.1M355.1,672.4V676.1" fill="none" stroke="#c2c2c2" stroke-width="1.2"/>
<path d="M377.2,653.8h8.6v1.6l-3.6,4.4h-1.4l-3.6,-4.4z" fill="#555"/><rect x="380.8" y="659" width="1.3" height="17.8" fill="#555"/>
<path d="M988.96,663.73L988.96,666.27L987.24,666.39L987.07,666.80L988.20,668.11L986.41,669.90L985.10,668.77L984.69,668.94L984.57,670.66L982.03,670.66L981.91,668.94L981.50,668.77L980.19,669.90L978.40,668.11L979.53,666.80L979.36,666.39L977.64,666.27L977.64,663.73L979.36,663.61L979.53,663.20L978.40,661.89L980.19,660.10L981.50,661.23L981.91,661.06L982.03,659.34L984.57,659.34L984.69,661.06L985.10,661.23L986.41,660.10L988.20,661.89L987.07,663.20L987.24,663.61Z" fill="#9a9a9a"/><circle cx="983.3" cy="665.0" r="2.3" fill="#f1f1f1"/>
<path d="M983,629.6a5,5 0 1 0 0.01,0zM987.8,634.6v5h-4.8" fill="#222"/><path d="M983,629.6a5,5 0 1 0 0.01,0z" fill="#222"/><rect x="983" y="634.6" width="5" height="5" fill="#222"/><path d="M980.9,636.8l1.9,-4.6h0.8l2,4.6M981.8,635.2h3" fill="none" stroke="#fff" stroke-width="1.3"/>
<path d="M203.2,57.4h3.8l-1.9,2.4z" fill="#222"/>
<path d="M411.4,57.4h3.8l-1.9,2.4z" fill="#222"/>
<path d="M563.6,57.4h3.8l-1.9,2.4z" fill="#222"/>
<path d="M636.3,57.4h3.8l-1.9,2.4z" fill="#222"/>
<path d="M692.2,57.4h3.8l-1.9,2.4z" fill="#222"/>
<path d="M745.2,57.4h3.8l-1.9,2.4z" fill="#222"/>
<path d="M796.2,57.4h3.8l-1.9,2.4z" fill="#222"/>
<path d="M65.6,35.5h4.0l-2.0,2.6z" fill="#222"/>
<rect x="848.3" y="0" width="20.5" height="6.7" fill="#b9b9b9"/>
<rect x="857.6" y="0" width="1.4" height="1.6" fill="#444"/>
<path d="M879.4,0a3,2.2 0 0 0 6,0z" fill="#555"/><path d="M904,0a3,2 0 0 0 6,0z" fill="#888"/><rect x="929.6" y="0" width="1.2" height="1.6" fill="#555"/><path d="M950.6,0a3,2 0 0 0 6,0z" fill="#555"/>
<path d="M974.6,0a7,3.6 0 0 0 14,0z" fill="#3d4f74"/><path d="M978.6,0a3,1.6 0 0 0 6,0z" fill="#8a94aa"/>
<g fill="#555"><rect x="11.4" y="0" width="1.6" height="0.9"/><rect x="14.4" y="0" width="1.6" height="0.9"/><rect x="17.4" y="0" width="1.6" height="0.9"/><rect x="35" y="0" width="8.4" height="1.3"/><rect x="68.4" y="0" width="8" height="0.9" fill="#777"/></g>
<path d="M435.4,0h6.4v1l-3.2,1.6l-3.2,-1.6z" fill="#555"/>
<g fill="none" stroke="#444" stroke-width="1">
<path d="M424.6,629.8v10.6" stroke="#7a7a7a" stroke-width="1.7"/><path d="M424.6,628.4l1.6,2.2h-3.2z" fill="#666" stroke="none"/>
<path d="M421.4,637.2C418,636.4 418,634 421.6,633.2C425,632.4 430.4,633.2 430.2,635.2C430,636.8 427.6,637.4 425.6,637.4" stroke-width="1.1"/><path d="M422.6,635.6l-2.4,1.6l2.6,1.2z" fill="#222" stroke="none"/>
<rect x="442.2" y="632.2" width="11.2" height="8" rx="1" stroke="#555"/><rect x="444.4" y="634.8" width="7" height="2.8" fill="#c8c8c8" stroke="#666" stroke-width="0.8"/><path d="M444.6,630.4h2.4M448.8,630.4h2.4" stroke="#555" stroke-width="1.2"/>
<path d="M464.4,640.4C463,638.6 462,636.8 461.6,635.2C462.4,634.4 463.6,635 464.2,636V631.4C464.2,630.4 465.6,630.4 465.8,631.4V630.2C466,629.2 467.6,629.2 467.6,630.2V630.6C467.8,629.8 469.2,629.8 469.4,630.8V631.6C469.8,631 471,631.2 471.2,632.2C471.6,635 471.4,638 470,640.4Z" fill="#fff" stroke="#444" stroke-width="0.9"/>
<circle cx="482.8" cy="633.6" r="3.5" fill="#fff" stroke="#555" stroke-width="1.1"/><path d="M485.4,636.4l3,3" stroke="#333" stroke-width="1.8"/><path d="M488.6,630.2h2.8M490,628.8v2.8M488.6,634h2.8" stroke="#444" stroke-width="0.9"/>
<circle cx="502.6" cy="633.4" r="4.3" fill="#fff" stroke="#555" stroke-width="1.1"/><rect x="500.6" y="631.4" width="4" height="4" fill="#eee" stroke="#666" stroke-width="0.8"/><path d="M505.8,636.8l3.2,3" stroke="#333" stroke-width="1.9"/>
<rect x="522" y="629.4" width="11.4" height="8" rx="0.8" fill="#7db4e8" stroke="#666" stroke-width="1.1"/><path d="M525.6,637.6v2.4h4.2v-2.4" fill="#ddd" stroke="#666" stroke-width="0.9"/><path d="M524,640.4h7.4" stroke="#666" stroke-width="0.9"/>
<rect x="544.2" y="629.2" width="11" height="11" fill="#fff" stroke="#777" stroke-width="0.9"/><rect x="544.6" y="635.4" width="10.2" height="4.4" fill="#b8cbe6" stroke="none"/><path d="M546.4,629.2v11M548.6,629.2v11M550.8,629.2v11M553,629.2v11M544.2,631.4h11M544.2,633.6h11M544.2,635.8h11M544.2,638h11" stroke="#888" stroke-width="0.6"/>
<g fill="#7fb0e4" stroke="#5a86be" stroke-width="0.8"><rect x="566.2" y="629.8" width="4.8" height="4.2"/><rect x="572" y="629.8" width="4.8" height="4.2"/><rect x="566.2" y="635" width="4.8" height="4.2"/><rect x="572" y="635" width="4.8" height="4.2"/></g>
</g>
<path d="M433.6,633.1h3.8l-1.9,2.5z" fill="#222"/>
<path d="M513.5,633.1h3.8l-1.9,2.5z" fill="#222"/>
<path d="M535.2,633.1h3.8l-1.9,2.5z" fill="#222"/>
<path d="M557.3,633.1h3.8l-1.9,2.5z" fill="#222"/>
<path d="M579.5,633.1h3.8l-1.9,2.5z" fill="#222"/>
<circle cx="922.0" cy="780" r="4.4" fill="#fff" stroke="#444" stroke-width="1"/>
<circle cx="922.0" cy="780" r="2.4" fill="#222"/>
<circle cx="951.3" cy="780" r="4.4" fill="#fff" stroke="#444" stroke-width="1"/>
<circle cx="978.0" cy="780" r="4.4" fill="#fff" stroke="#444" stroke-width="1"/>
</svg>
<div class="abs" id="edgeL"></div>
<div class="abs" id="edgeR"></div>
</body>
</html>
